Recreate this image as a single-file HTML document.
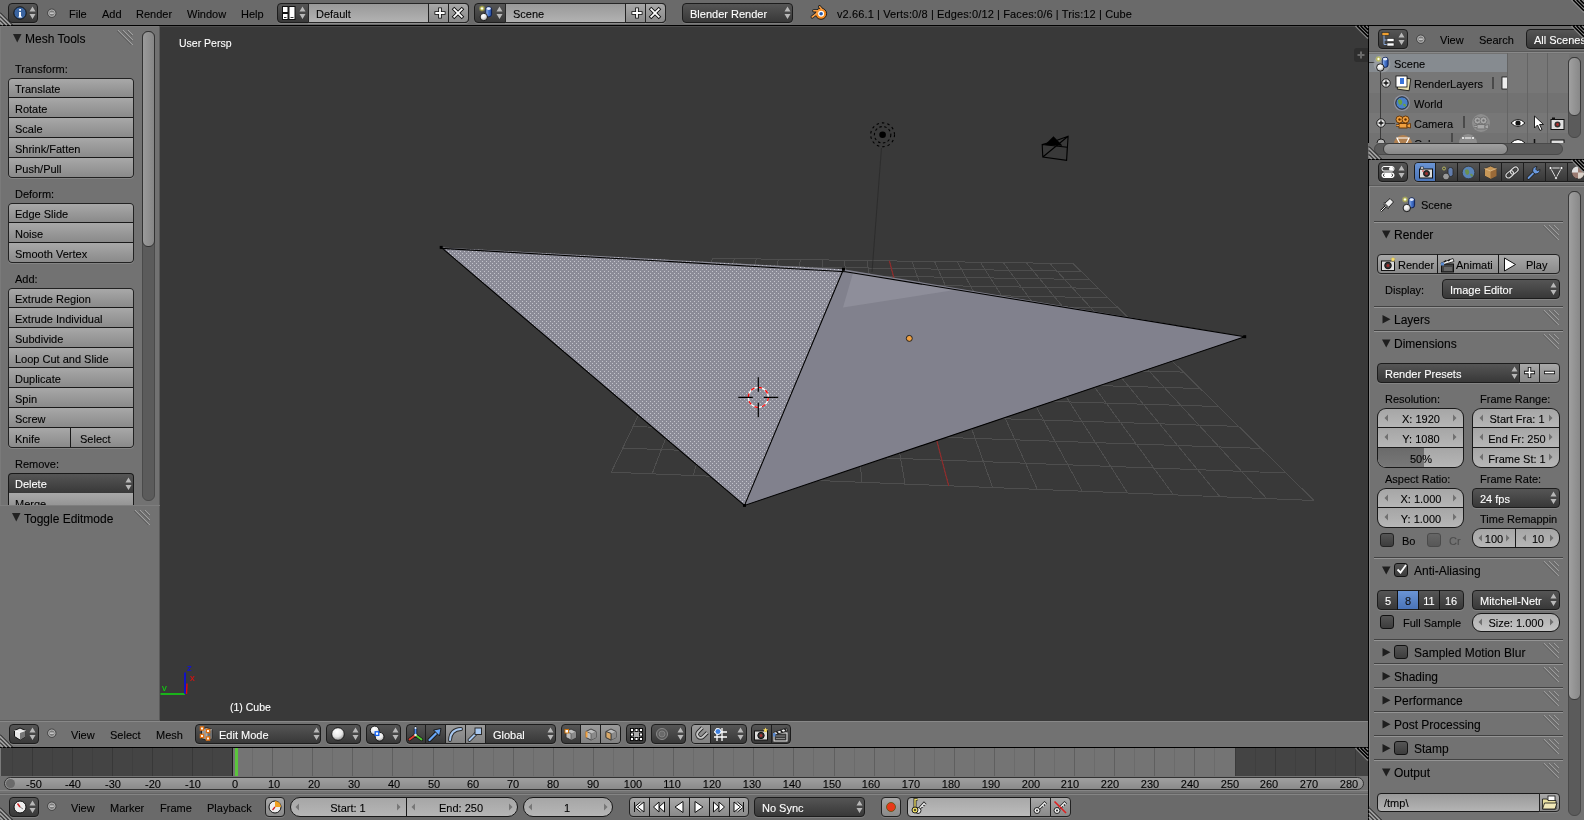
<!DOCTYPE html><html><head><meta charset="utf-8"><style>
*{box-sizing:border-box;margin:0;padding:0}
html,body{width:1584px;height:820px;overflow:hidden;background:#727272;font-family:"Liberation Sans",sans-serif;font-size:11px;color:#000}
.a{position:absolute}
.t{position:absolute;white-space:pre;line-height:1;-webkit-text-stroke:0.1px currentColor;will-change:transform}
svg{position:absolute;overflow:visible}
</style></head><body>
<svg width="0" height="0" style="position:absolute"><defs><radialGradient id="sphG" cx="0.4" cy="0.3" r="0.75"><stop offset="0" stop-color="#fff"/><stop offset="0.5" stop-color="#e6e6e6"/><stop offset="1" stop-color="#8a8a8a"/></radialGradient><linearGradient id="cylG" x1="0" x2="1"><stop offset="0" stop-color="#a8c4f0"/><stop offset="0.45" stop-color="#4a7ad0"/><stop offset="1" stop-color="#23489a"/></linearGradient></defs></svg>
<div class="a" style="left:0px;top:0px;width:1584px;height:25px;background:#6a6a6a"></div>
<div class="a" style="left:0px;top:25px;width:1584px;height:1px;background:#000"></div>
<div class="a" style="left:0px;top:26px;width:160px;height:695px;background:#727272"></div>
<div class="a" style="left:160px;top:26px;width:1208px;height:695px;background:#393939"></div>
<div class="a" style="left:160px;top:26px;width:1208px;height:1px;background:#4c4c4c"></div>
<div class="a" style="left:0px;top:721px;width:1368px;height:26px;background:#727272"></div>
<div class="a" style="left:0px;top:747px;width:1368px;height:1px;background:#000"></div>
<div class="a" style="left:0px;top:748px;width:1368px;height:46px;background:#727272"></div>
<div class="a" style="left:0px;top:794px;width:1368px;height:26px;background:#6a6a6a"></div>
<div class="a" style="left:1368px;top:26px;width:1px;height:794px;background:#000"></div>
<div class="a" style="left:1369px;top:26px;width:215px;height:133px;background:#727272"></div>
<div class="a" style="left:1369px;top:159px;width:215px;height:1px;background:#000"></div>
<div class="a" style="left:1369px;top:160px;width:215px;height:660px;background:#727272"></div>
<div class="a" style="left:8px;top:3px;width:30px;height:20px;background:linear-gradient(#555,#383838);border:1px solid #1c1c1c;box-shadow:0 1px 0 rgba(255,255,255,0.13);border-radius:4px"></div>
<svg style="left:13px;top:6px" width="14" height="14" viewBox="0 0 14 14"><circle cx="7" cy="7" r="6.2" fill="#3a64a0" stroke="#111" stroke-width="1"/><path d="M6 6h2v4.5h1v1H5.5v-1h0.5z M6.2 3h1.8v1.8H6.2z" fill="#fff"/></svg>
<svg style="left:29px;top:6px" width="8" height="14" viewBox="0 0 8 14"><path d="M0.5 5.5 L3.5 0.5 L6.5 5.5Z M0.5 8 L3.5 13 L6.5 8Z" fill="#b8b8b8"/></svg>
<svg style="left:47px;top:8px" width="12" height="12" viewBox="0 0 12 12"><circle cx="4.8" cy="5.2" r="4.2" fill="#7a7a7a" stroke="#3e3e3e" stroke-width="0.9"/><circle cx="4.8" cy="5.2" r="3.2" fill="none" stroke="#b8b8b8" stroke-width="0.9"/><path d="M2.8 5.2h4" stroke="#d0d0d0" stroke-width="1.4"/></svg>
<div class="t" style="left:69px;top:8.69px;font-size:11px;color:#000;">File</div>
<div class="t" style="left:102px;top:8.69px;font-size:11px;color:#000;">Add</div>
<div class="t" style="left:136px;top:8.69px;font-size:11px;color:#000;">Render</div>
<div class="t" style="left:187px;top:8.69px;font-size:11px;color:#000;">Window</div>
<div class="t" style="left:241px;top:8.69px;font-size:11px;color:#000;">Help</div>
<div class="a" style="left:277px;top:3px;width:192px;height:20px;background:linear-gradient(#555,#383838);border:1px solid #1c1c1c;box-shadow:0 1px 0 rgba(255,255,255,0.13);border-radius:4px"></div>
<div class="a" style="left:308px;top:3px;width:121px;height:20px;background:linear-gradient(#999,#b2b2b2);border:1px solid #262626;box-shadow:0 1px 0 rgba(255,255,255,0.13);"></div>
<div class="a" style="left:428px;top:3px;width:21px;height:20px;background:linear-gradient(#a8a8a8,#8a8a8a);border:1px solid #222;box-shadow:0 1px 0 rgba(255,255,255,0.13);"></div>
<div class="a" style="left:448px;top:3px;width:21px;height:20px;background:linear-gradient(#a8a8a8,#8a8a8a);border:1px solid #222;box-shadow:0 1px 0 rgba(255,255,255,0.13);border-radius:0 4px 4px 0"></div>
<div class="t" style="left:316px;top:8.69px;font-size:11px;color:#000;">Default</div>
<div class="a" style="left:474px;top:3px;width:192px;height:20px;background:linear-gradient(#555,#383838);border:1px solid #1c1c1c;box-shadow:0 1px 0 rgba(255,255,255,0.13);border-radius:4px"></div>
<div class="a" style="left:505px;top:3px;width:121px;height:20px;background:linear-gradient(#999,#b2b2b2);border:1px solid #262626;box-shadow:0 1px 0 rgba(255,255,255,0.13);"></div>
<div class="a" style="left:625px;top:3px;width:21px;height:20px;background:linear-gradient(#a8a8a8,#8a8a8a);border:1px solid #222;box-shadow:0 1px 0 rgba(255,255,255,0.13);"></div>
<div class="a" style="left:645px;top:3px;width:21px;height:20px;background:linear-gradient(#a8a8a8,#8a8a8a);border:1px solid #222;box-shadow:0 1px 0 rgba(255,255,255,0.13);border-radius:0 4px 4px 0"></div>
<div class="t" style="left:513px;top:8.69px;font-size:11px;color:#000;">Scene</div>
<div class="a" style="left:682px;top:3px;width:111px;height:20px;background:linear-gradient(#555,#383838);border:1px solid #1c1c1c;box-shadow:0 1px 0 rgba(255,255,255,0.13);border-radius:4px"></div>
<div class="t" style="left:690px;top:8.69px;font-size:11px;color:#fff;">Blender Render</div>
<svg style="left:784px;top:6px" width="8" height="14" viewBox="0 0 8 14"><path d="M0.5 5.5 L3.5 0.5 L6.5 5.5Z M0.5 8 L3.5 13 L6.5 8Z" fill="#b8b8b8"/></svg>
<div class="t" style="left:837px;top:8.69px;font-size:11px;color:#000;letter-spacing:0.12px">v2.66.1 | Verts:0/8 | Edges:0/12 | Faces:0/6 | Tris:12 | Cube</div>
<svg style="left:282px;top:6px" width="14" height="14" viewBox="0 0 14 14"><rect x="0.5" y="0.5" width="5.5" height="6" fill="#fff" stroke="#111" stroke-width="1"/><rect x="0.5" y="7.5" width="5.5" height="6" fill="#fff" stroke="#111" stroke-width="1"/><rect x="7" y="0.5" width="6" height="13" fill="#fff" stroke="#111" stroke-width="1"/><path d="M2 11.5H4.5M8.5 11.5H11.5" stroke="#333" stroke-width="1"/></svg>
<svg style="left:299px;top:6px" width="8" height="14" viewBox="0 0 8 14"><path d="M0.5 5.5 L3.5 0.5 L6.5 5.5Z M0.5 8 L3.5 13 L6.5 8Z" fill="#b8b8b8"/></svg>
<svg style="left:434px;top:7px" width="12" height="12" viewBox="0 0 12 12"><path d="M6 0.5V11.5M0.5 6H11.5" stroke="#111" stroke-width="3.6"/><path d="M6 1.3V10.7M1.3 6H10.7" stroke="#fff" stroke-width="1.8"/></svg>
<svg style="left:452px;top:7px" width="12" height="12" viewBox="0 0 12 12"><path d="M1 1L11 11M11 1L1 11" stroke="#111" stroke-width="3.6"/><path d="M1.6 1.6L10.4 10.4M10.4 1.6L1.6 10.4" stroke="#fff" stroke-width="1.8"/></svg>
<svg style="left:631px;top:7px" width="12" height="12" viewBox="0 0 12 12"><path d="M6 0.5V11.5M0.5 6H11.5" stroke="#111" stroke-width="3.6"/><path d="M6 1.3V10.7M1.3 6H10.7" stroke="#fff" stroke-width="1.8"/></svg>
<svg style="left:649px;top:7px" width="12" height="12" viewBox="0 0 12 12"><path d="M1 1L11 11M11 1L1 11" stroke="#111" stroke-width="3.6"/><path d="M1.6 1.6L10.4 10.4M10.4 1.6L1.6 10.4" stroke="#fff" stroke-width="1.8"/></svg>
<svg style="left:478px;top:5px" width="16" height="16" viewBox="0 0 16 16"><circle cx="4" cy="3.5" r="3" fill="#d8d860" opacity="0.35"/><circle cx="4" cy="3.5" r="1.7" fill="#fffff0" stroke="#b0b030" stroke-width="0.8"/><rect x="7.8" y="1.8" width="5.8" height="10" rx="2.6" fill="url(#cylG)" stroke="#0c1c4c" stroke-width="0.9"/><ellipse cx="10.7" cy="3.6" rx="2.2" ry="1.3" fill="#e4ecff"/><circle cx="5.8" cy="12" r="3.7" fill="url(#sphG)" stroke="#111" stroke-width="0.9"/></svg>
<svg style="left:496px;top:6px" width="8" height="14" viewBox="0 0 8 14"><path d="M0.5 5.5 L3.5 0.5 L6.5 5.5Z M0.5 8 L3.5 13 L6.5 8Z" fill="#b8b8b8"/></svg>
<svg style="left:809px;top:5px" width="19" height="16" viewBox="0 0 19 16"><path d="M4.8 5.8H10.5M3.2 12L8.5 7.8M10.6 1.8L13 4.5" stroke="#1e1e1e" stroke-width="3.2" stroke-linecap="round"/><circle cx="12" cy="8.7" r="5.6" fill="#f58a1e" stroke="#1e1e1e" stroke-width="1"/><path d="M4.8 5.8H10.5M3.2 12L8.5 7.8M10.6 1.8L13 4.5" stroke="#f8a048" stroke-width="1.6" stroke-linecap="round"/><circle cx="12.1" cy="8.7" r="3" fill="#fff"/><circle cx="12.1" cy="8.7" r="1.8" fill="#2a5aa8"/></svg>
<svg style="left:0px;top:11px" width="14" height="14" viewBox="0 0 14 14"><path d="M0 3L11 14M0 7L7 14M0 11L3 14" stroke="#a0a0a0" stroke-width="2"/><path d="M0 1.5L12.5 14M0 5.5L8.5 14M0 9.5L4.5 14" stroke="#111" stroke-width="1"/></svg>
<svg style="left:1570px;top:0px" width="14" height="14" viewBox="0 0 14 14"><path d="M1.5 0L14 12.5M5 0L14 9M8.5 0L14 5.5M12 0L14 2" stroke="#8a8a8a" stroke-width="1.5"/><path d="M3.25 0L14 10.75M6.75 0L14 7.25M10.25 0L14 3.75" stroke="#000" stroke-width="1.5"/></svg>
<div class="a" style="left:0px;top:26px;width:160px;height:479px;background:#727272"></div>
<div class="a" style="left:0px;top:26px;width:160px;height:1px;background:#7a7a7a"></div>
<div class="a" style="left:0px;top:505px;width:160px;height:1px;background:#7e7e7e"></div>
<div class="a" style="left:0px;top:506px;width:160px;height:215px;background:#727272"></div>
<div class="a" style="left:0px;top:26px;width:1px;height:695px;background:#7a7a7a"></div>
<div class="a" style="left:159px;top:26px;width:1px;height:695px;background:#5a5a5a"></div>
<div class="a" style="left:142px;top:31px;width:13px;height:470px;background:#5b5b5b;border:1px solid #4a4a4a;border-radius:6px"></div>
<div class="a" style="left:142px;top:31px;width:13px;height:216px;background:linear-gradient(90deg,#9a9a9a,#868686);border:1px solid #323232;border-radius:6px"></div>
<svg style="left:13px;top:34px" width="9" height="9" viewBox="0 0 9 9"><path d="M0 0H8.5L4.25 8.5Z" fill="#222"/></svg>
<div class="t" style="left:25px;top:32.84px;font-size:12px;color:#000;">Mesh Tools</div>
<svg style="left:117px;top:29px" width="17" height="17" viewBox="0 0 17 17"><path d="M1 1L16 16M6 1L16 11M11 1L16 6" stroke="#a0a0a0"/><path d="M0 2L14 16M5 2L15 12M10 2L15 7" stroke="#555" stroke-opacity="0.6"/></svg>
<div class="t" style="left:15px;top:63.69px;font-size:11px;color:#000;">Transform:</div>
<div class="a" style="left:8px;top:78px;width:126px;height:100px;border:1px solid #222;box-shadow:0 1px 0 rgba(255,255,255,0.13);border-radius:4px;background:#191919"></div>
<div class="a" style="left:9px;top:79px;width:124px;height:18px;background:linear-gradient(#a8a8a8,#8a8a8a);border-radius:3px 3px 0 0;"></div>
<div class="t" style="left:15px;top:83.69px;font-size:11px;color:#000;">Translate</div>
<div class="a" style="left:9px;top:98px;width:124px;height:19px;background:linear-gradient(#a8a8a8,#8a8a8a);"></div>
<div class="t" style="left:15px;top:103.69px;font-size:11px;color:#000;">Rotate</div>
<div class="a" style="left:9px;top:118px;width:124px;height:19px;background:linear-gradient(#a8a8a8,#8a8a8a);"></div>
<div class="t" style="left:15px;top:123.69px;font-size:11px;color:#000;">Scale</div>
<div class="a" style="left:9px;top:138px;width:124px;height:19px;background:linear-gradient(#a8a8a8,#8a8a8a);"></div>
<div class="t" style="left:15px;top:143.69px;font-size:11px;color:#000;">Shrink/Fatten</div>
<div class="a" style="left:9px;top:158px;width:124px;height:19px;background:linear-gradient(#a8a8a8,#8a8a8a);border-radius:0 0 3px 3px;"></div>
<div class="t" style="left:15px;top:163.69px;font-size:11px;color:#000;">Push/Pull</div>
<div class="t" style="left:15px;top:188.69px;font-size:11px;color:#000;">Deform:</div>
<div class="a" style="left:8px;top:203px;width:126px;height:60px;border:1px solid #222;box-shadow:0 1px 0 rgba(255,255,255,0.13);border-radius:4px;background:#191919"></div>
<div class="a" style="left:9px;top:204px;width:124px;height:18px;background:linear-gradient(#a8a8a8,#8a8a8a);border-radius:3px 3px 0 0;"></div>
<div class="t" style="left:15px;top:208.69px;font-size:11px;color:#000;">Edge Slide</div>
<div class="a" style="left:9px;top:223px;width:124px;height:19px;background:linear-gradient(#a8a8a8,#8a8a8a);"></div>
<div class="t" style="left:15px;top:228.69px;font-size:11px;color:#000;">Noise</div>
<div class="a" style="left:9px;top:243px;width:124px;height:19px;background:linear-gradient(#a8a8a8,#8a8a8a);border-radius:0 0 3px 3px;"></div>
<div class="t" style="left:15px;top:248.69px;font-size:11px;color:#000;">Smooth Vertex</div>
<div class="t" style="left:15px;top:273.69px;font-size:11px;color:#000;">Add:</div>
<div class="a" style="left:8px;top:288px;width:126px;height:160px;border:1px solid #222;box-shadow:0 1px 0 rgba(255,255,255,0.13);border-radius:4px;background:#191919"></div>
<div class="a" style="left:9px;top:289px;width:124px;height:18px;background:linear-gradient(#a8a8a8,#8a8a8a);border-radius:3px 3px 0 0;"></div>
<div class="t" style="left:15px;top:293.69px;font-size:11px;color:#000;">Extrude Region</div>
<div class="a" style="left:9px;top:308px;width:124px;height:19px;background:linear-gradient(#a8a8a8,#8a8a8a);"></div>
<div class="t" style="left:15px;top:313.69px;font-size:11px;color:#000;">Extrude Individual</div>
<div class="a" style="left:9px;top:328px;width:124px;height:19px;background:linear-gradient(#a8a8a8,#8a8a8a);"></div>
<div class="t" style="left:15px;top:333.69px;font-size:11px;color:#000;">Subdivide</div>
<div class="a" style="left:9px;top:348px;width:124px;height:19px;background:linear-gradient(#a8a8a8,#8a8a8a);"></div>
<div class="t" style="left:15px;top:353.69px;font-size:11px;color:#000;">Loop Cut and Slide</div>
<div class="a" style="left:9px;top:368px;width:124px;height:19px;background:linear-gradient(#a8a8a8,#8a8a8a);"></div>
<div class="t" style="left:15px;top:373.69px;font-size:11px;color:#000;">Duplicate</div>
<div class="a" style="left:9px;top:388px;width:124px;height:19px;background:linear-gradient(#a8a8a8,#8a8a8a);"></div>
<div class="t" style="left:15px;top:393.69px;font-size:11px;color:#000;">Spin</div>
<div class="a" style="left:9px;top:408px;width:124px;height:19px;background:linear-gradient(#a8a8a8,#8a8a8a);"></div>
<div class="t" style="left:15px;top:413.69px;font-size:11px;color:#000;">Screw</div>
<div class="a" style="left:9px;top:428px;width:61px;height:19px;background:linear-gradient(#a8a8a8,#8a8a8a);border-radius:0 0 0 3px;"></div>
<div class="a" style="left:71px;top:428px;width:62px;height:19px;background:linear-gradient(#a8a8a8,#8a8a8a);border-radius:0 0 3px 0;"></div>
<div class="t" style="left:15px;top:433.69px;font-size:11px;color:#000;">Knife</div>
<div class="t" style="left:80px;top:433.69px;font-size:11px;color:#000;">Select</div>
<div class="t" style="left:15px;top:458.69px;font-size:11px;color:#000;">Remove:</div>
<div class="a" style="left:0;top:26px;width:160px;height:479px;overflow:hidden">
<div class="a" style="left:8px;top:447px;width:126px;height:40px;background:#191919;border-radius:4px"></div>
<div class="a" style="left:9px;top:448px;width:124px;height:19px;background:linear-gradient(#555,#383838);border-radius:3px 3px 0 0"></div>
<div class="a" style="left:9px;top:467px;width:124px;height:19px;background:linear-gradient(#a8a8a8,#8a8a8a)"></div>
</div>
<div class="t" style="left:15px;top:478.69px;font-size:11px;color:#fff;">Delete</div>
<svg style="left:125px;top:477px" width="8" height="14" viewBox="0 0 8 14"><path d="M0.5 5.5 L3.5 0.5 L6.5 5.5Z M0.5 8 L3.5 13 L6.5 8Z" fill="#b8b8b8"/></svg>
<div class="t" style="left:15px;top:498.69px;font-size:11px;color:#000;">Merge</div>
<div class="a" style="left:0px;top:505px;width:160px;height:1px;background:#7e7e7e"></div>
<div class="a" style="left:0px;top:506px;width:159px;height:215px;background:#727272"></div>
<svg style="left:12px;top:513px" width="9" height="9" viewBox="0 0 9 9"><path d="M0 0H8.5L4.25 8.5Z" fill="#222"/></svg>
<div class="t" style="left:24px;top:512.84px;font-size:12px;color:#000;">Toggle Editmode</div>
<svg style="left:134px;top:509px" width="17" height="17" viewBox="0 0 17 17"><path d="M1 1L16 16M6 1L16 11M11 1L16 6" stroke="#a0a0a0"/><path d="M0 2L14 16M5 2L15 12M10 2L15 7" stroke="#555" stroke-opacity="0.6"/></svg>
<svg style="left:160px;top:26px" width="1208" height="695" viewBox="0 0 1208 695"><defs><pattern id="dots" x="0" y="0" width="4" height="4" patternUnits="userSpaceOnUse"><rect width="4" height="4" fill="#8b8b97"/><rect x="0" y="1" width="1" height="1" fill="#c4c4cc"/><rect x="2" y="3" width="1" height="1" fill="#c4c4cc"/></pattern></defs><path d="M553.0 232.3L451.3 446.2M553.0 232.3L913.2 237.6M574.7 232.6L492.1 447.8M549.6 239.5L921.0 245.4M596.4 232.9L533.2 449.5M545.9 247.2L929.4 253.6M618.3 233.2L574.8 451.2M542.0 255.4L938.4 262.4M640.3 233.6L616.7 452.9M537.8 264.2L947.9 271.8M662.4 233.9L659.1 454.6M533.4 273.6L958.2 282.0M684.6 234.2L701.8 456.3M528.6 283.6L969.3 292.8M706.9 234.6L745.0 458.0M523.5 294.4L981.2 304.6M729.4 234.9L788.7 459.8M517.9 306.0L994.1 317.3M751.9 235.2L832.7 461.6M512.0 318.6L1008.1 331.0M774.6 235.6L877.3 463.4M505.5 332.2L1023.4 346.1M797.4 235.9L922.2 465.2M498.4 347.1L1040.1 362.5M820.3 236.2L967.6 467.0M490.8 363.2L1058.4 380.5M843.3 236.6L1013.5 468.9M482.3 381.0L1078.6 400.4M866.5 236.9L1059.9 470.7M473.0 400.5L1101.0 422.4M889.8 237.3L1106.7 472.6M462.8 422.1L1126.0 447.0M913.2 237.6L1154.0 474.5M451.3 446.2L1154.0 474.5" stroke="#4e4e4e" stroke-width="1" fill="none" shape-rendering="crispEdges"/><path d="M729.4 234.9L788.7 459.8" stroke="#8f2a2a" stroke-width="1.2"/><path d="M721.5 122L712 246" stroke="#262626" stroke-width="0.8" stroke-opacity="0.8"/><polygon points="683.5,243.2 1084.7,310.7 584.5,479.4" fill="#81818d"/><polygon points="693.0,247.0 798.0,263.5 683.0,281.5" fill="#8e8e9a"/><polygon points="281.2,221.4 683.5,243.2 584.5,479.4" fill="url(#dots)"/><polyline points="281.2,222.4 685.5,245.7 1084.7,310.7 584.5,479.4 281.2,221.4" fill="none" stroke="#000" stroke-width="1.1"/><path d="M683.5,243.2L584.5,479.4" stroke="#000" stroke-width="1.1"/><rect x="279.7" y="219.9" width="3" height="3" fill="#000"/><rect x="682.0" y="241.7" width="3" height="3" fill="#000"/><rect x="583.0" y="477.9" width="3" height="3" fill="#000"/><rect x="1083.2" y="309.2" width="3" height="3" fill="#000"/><circle cx="749.3" cy="312.4" r="3" fill="#f0a040" stroke="#222" stroke-width="1"/><circle cx="598.3" cy="371.3" r="10" fill="none" stroke="#fff" stroke-width="1.3"/><circle cx="598.3" cy="371.3" r="10" fill="none" stroke="#f00" stroke-width="1.3" stroke-dasharray="3.9 3.9"/><path d="M578.3 371.3H592.8M603.8 371.3H618.3M598.3 351.3V365.8M598.3 376.8V391.3" stroke="#000" stroke-width="1.2"/><circle cx="722.6" cy="108.80000000000001" r="3.3" fill="#000"/><circle cx="722.6" cy="108.80000000000001" r="8.2" fill="none" stroke="#000" stroke-width="1.1" stroke-dasharray="2.5 2.5"/><circle cx="722.6" cy="108.80000000000001" r="11.9" fill="none" stroke="#000" stroke-width="1.1" stroke-dasharray="2.5 3"/><path d="M882.2,118.5L882.8,131.0L906.6,134.4L907.3,121.3Z M882.2,118.5L895.0,115.0L908.1,110.3L906.6,134.4 M882.8,131.0L908.1,110.3" fill="none" stroke="#000" stroke-width="1.1"/><polygon points="884.6,119.1 893.5,110.3 902.6,119.7" fill="#000"/><path d="M0.5 668H25" stroke="#10dc10" stroke-width="1.5"/><path d="M25 668V646.5" stroke="#0a0ae6" stroke-width="1.6"/><path d="M26.5 668L27 657.5" stroke="#e60a0a" stroke-width="1.4"/></svg>
<div class="t" style="left:179px;top:38.11px;font-size:10.5px;color:#fff;">User Persp</div>
<div class="t" style="left:230px;top:702.11px;font-size:10.5px;color:#fff;">(1) Cube</div>
<div class="t" style="left:187px;top:662.96px;font-size:9.5px;color:#1010e0;">z</div>
<div class="t" style="left:189.5px;top:673.46px;font-size:9.5px;color:#e01010;">x</div>
<div class="t" style="left:162px;top:682.96px;font-size:9.5px;color:#10d010;">v</div>
<svg style="left:1355px;top:26px" width="13" height="13" viewBox="0 0 13 13"><path d="M0.5 0L13 12.5M4 0L13 9M7.5 0L13 5.5M11 0L13 2" stroke="#858585" stroke-width="1.5"/><path d="M2.25 0L13 10.75M5.75 0L13 7.25M9.25 0L13 3.75" stroke="#000" stroke-width="1.5"/></svg>
<div class="a" style="left:1354px;top:48px;width:14px;height:14px;background:#2e2e2e;border-radius:3px 0 0 3px"></div>
<svg style="left:1356px;top:50px" width="10" height="10" viewBox="0 0 10 10"><path d="M5 1.5V8.5M1.5 5H8.5" stroke="#6a6a6a" stroke-width="2"/></svg>
<div class="a" style="left:0px;top:720px;width:160px;height:1px;background:#5e5e5e"></div>
<div class="a" style="left:0px;top:721px;width:1368px;height:1px;background:#888888"></div>
<div class="a" style="left:9px;top:724px;width:30px;height:20px;background:linear-gradient(#555,#383838);border:1px solid #1c1c1c;box-shadow:0 1px 0 rgba(255,255,255,0.13);border-radius:4px"></div>
<svg style="left:13px;top:727px" width="14" height="14" viewBox="0 0 14 14"><path d="M7 1L12.5 3.5V9.5L7 13L1.5 9.5V3.5Z" fill="#e8e8e8" stroke="#111" stroke-width="1"/><path d="M7 5.5L12.5 3.5V9.5L7 13Z" fill="#777"/><path d="M1.5 3.5L7 5.5L12.5 3.5" stroke="#fff" fill="none" stroke-width="0.8"/></svg>
<svg style="left:29px;top:727px" width="8" height="14" viewBox="0 0 8 14"><path d="M0.5 5.5 L3.5 0.5 L6.5 5.5Z M0.5 8 L3.5 13 L6.5 8Z" fill="#b8b8b8"/></svg>
<svg style="left:47px;top:728px" width="12" height="12" viewBox="0 0 12 12"><circle cx="4.8" cy="5.2" r="4.2" fill="#7a7a7a" stroke="#3e3e3e" stroke-width="0.9"/><circle cx="4.8" cy="5.2" r="3.2" fill="none" stroke="#b8b8b8" stroke-width="0.9"/><path d="M2.8 5.2h4" stroke="#d0d0d0" stroke-width="1.4"/></svg>
<div class="t" style="left:71px;top:729.69px;font-size:11px;color:#000;">View</div>
<div class="t" style="left:110px;top:729.69px;font-size:11px;color:#000;">Select</div>
<div class="t" style="left:156px;top:729.69px;font-size:11px;color:#000;">Mesh</div>
<div class="a" style="left:195px;top:724px;width:126px;height:20px;background:linear-gradient(#555,#383838);border:1px solid #1c1c1c;box-shadow:0 1px 0 rgba(255,255,255,0.13);border-radius:4px"></div>
<svg style="left:199px;top:726px" width="16" height="16" viewBox="0 0 16 16"><path d="M2.5 3L7.5 1.5L13 3.5V12.5L8 14.5L2.5 12.5Z" fill="#9a9a9a" stroke="#1a1a1a" stroke-width="0.9"/><path d="M8 5L13 3.5V12.5L8 14.5Z" fill="#6e6e6e"/><path d="M2.5 3L8 5L13 3.5M8 5V14.5" stroke="#c8c8c8" stroke-width="0.7" fill="none"/><rect x="1.4" y="0.8999999999999999" width="3.2" height="3.2" fill="#fff" stroke="#e07010" stroke-width="1.3"/><rect x="7.4" y="3.4" width="3.2" height="3.2" fill="#fff" stroke="#e07010" stroke-width="1.3"/><rect x="1.4" y="8.4" width="3.2" height="3.2" fill="#fff" stroke="#e07010" stroke-width="1.3"/><rect x="7.4" y="10.9" width="3.2" height="3.2" fill="#fff" stroke="#e07010" stroke-width="1.3"/></svg>
<div class="t" style="left:219px;top:729.69px;font-size:11px;color:#fff;">Edit Mode</div>
<svg style="left:313px;top:727px" width="8" height="14" viewBox="0 0 8 14"><path d="M0.5 5.5 L3.5 0.5 L6.5 5.5Z M0.5 8 L3.5 13 L6.5 8Z" fill="#b8b8b8"/></svg>
<div class="a" style="left:326px;top:724px;width:35px;height:20px;background:linear-gradient(#555,#383838);border:1px solid #1c1c1c;box-shadow:0 1px 0 rgba(255,255,255,0.13);border-radius:4px"></div>
<svg style="left:330px;top:726px" width="16" height="16" viewBox="0 0 16 16"><defs><radialGradient id="sph" cx="0.42" cy="0.3" r="0.75"><stop offset="0" stop-color="#fff"/><stop offset="0.55" stop-color="#e8e8e8"/><stop offset="1" stop-color="#8a8a8a"/></radialGradient></defs><circle cx="8" cy="8" r="6.3" fill="url(#sph)" stroke="#111" stroke-width="0.9"/></svg>
<svg style="left:352px;top:727px" width="8" height="14" viewBox="0 0 8 14"><path d="M0.5 5.5 L3.5 0.5 L6.5 5.5Z M0.5 8 L3.5 13 L6.5 8Z" fill="#b8b8b8"/></svg>
<div class="a" style="left:366px;top:724px;width:35px;height:20px;background:linear-gradient(#555,#383838);border:1px solid #1c1c1c;box-shadow:0 1px 0 rgba(255,255,255,0.13);border-radius:4px"></div>
<svg style="left:369px;top:725px" width="16" height="17" viewBox="0 0 16 17"><circle cx="10.6" cy="11.75" r="4.4" fill="url(#sph)" stroke="#111" stroke-width="0.9"/><circle cx="5.7" cy="5.5" r="4.4" fill="url(#sph)" stroke="#111" stroke-width="0.9"/><rect x="6.2" y="6.8" width="3.6" height="3.6" fill="#fff" stroke="#1060f0" stroke-width="1.3"/></svg>
<svg style="left:392px;top:727px" width="8" height="14" viewBox="0 0 8 14"><path d="M0.5 5.5 L3.5 0.5 L6.5 5.5Z M0.5 8 L3.5 13 L6.5 8Z" fill="#b8b8b8"/></svg>
<div class="a" style="left:406px;top:724px;width:150px;height:20px;background:linear-gradient(#555,#383838);border:1px solid #1c1c1c;box-shadow:0 1px 0 rgba(255,255,255,0.13);border-radius:4px"></div>
<div class="a" style="left:445px;top:725px;width:40px;height:18px;background:linear-gradient(#9a9a9a,#828282)"></div>
<div class="a" style="left:425px;top:724px;width:1px;height:20px;background:#1e1e1e"></div>
<div class="a" style="left:445px;top:724px;width:1px;height:20px;background:#1e1e1e"></div>
<div class="a" style="left:465px;top:724px;width:1px;height:20px;background:#1e1e1e"></div>
<div class="a" style="left:485px;top:724px;width:1px;height:20px;background:#1e1e1e"></div>
<svg style="left:407px;top:726px" width="17" height="17" viewBox="0 0 17 17"><path d="M8.5 9V2M8.5 9L2.5 13.5M8.5 9L14.5 13.5" stroke="#1a1a1a" stroke-width="3.4" stroke-linecap="round"/><path d="M8.5 9V2" stroke="#4a8af0" stroke-width="1.8" stroke-linecap="round"/><path d="M8.5 9L2.5 13.5" stroke="#e04030" stroke-width="1.8" stroke-linecap="round"/><path d="M8.5 9L14.5 13.5" stroke="#50d030" stroke-width="1.8" stroke-linecap="round"/><circle cx="8.5" cy="9" r="1.2" fill="#eee"/><circle cx="8.5" cy="2" r="1" fill="#eee"/></svg>
<svg style="left:427px;top:726px" width="17" height="17" viewBox="0 0 17 17"><path d="M2.5 14L10 6.5" stroke="#1a1a1a" stroke-width="4" stroke-linecap="round"/><path d="M2.5 14L10 6.5" stroke="#6aa8f8" stroke-width="2.2" stroke-linecap="round"/><path d="M14 2.5L6.5 4L12.5 10Z" fill="#6aa8f8" stroke="#1a1a1a" stroke-width="1" stroke-linejoin="round"/></svg>
<svg style="left:447px;top:726px" width="17" height="17" viewBox="0 0 17 17"><path d="M3 14Q3.5 3.5 14 3" stroke="#2a2a2a" stroke-width="3.8" fill="none" stroke-linecap="round"/><path d="M3 14Q3.5 3.5 14 3" stroke="#a8c8f0" stroke-width="2" fill="none" stroke-linecap="round"/></svg>
<svg style="left:467px;top:726px" width="17" height="17" viewBox="0 0 17 17"><path d="M2.5 14L9 7.5" stroke="#2a2a2a" stroke-width="3.8" stroke-linecap="round"/><path d="M2.5 14L9 7.5" stroke="#a8c8f0" stroke-width="2" stroke-linecap="round"/><rect x="8" y="2" width="6.5" height="6.5" fill="#a8c8f0" stroke="#2a2a2a" stroke-width="1"/></svg>
<div class="t" style="left:493px;top:729.69px;font-size:11px;color:#fff;">Global</div>
<svg style="left:547px;top:727px" width="8" height="14" viewBox="0 0 8 14"><path d="M0.5 5.5 L3.5 0.5 L6.5 5.5Z M0.5 8 L3.5 13 L6.5 8Z" fill="#b8b8b8"/></svg>
<div class="a" style="left:561px;top:724px;width:60px;height:20px;background:linear-gradient(#555,#383838);border:1px solid #1c1c1c;box-shadow:0 1px 0 rgba(255,255,255,0.13);border-radius:4px"></div>
<div class="a" style="left:580px;top:725px;width:40px;height:18px;background:linear-gradient(#9a9a9a,#828282);border-radius:0 3px 3px 0"></div>
<div class="a" style="left:580px;top:724px;width:1px;height:20px;background:#1e1e1e"></div>
<div class="a" style="left:600px;top:724px;width:1px;height:20px;background:#1e1e1e"></div>
<svg style="left:564px;top:727px" width="14" height="15" viewBox="0 0 14 15"><path d="M7 2L12 4.5V10.5L7 13L2 10.5V4.5Z" fill="#bdbdbd" stroke="#333" stroke-width="0.9"/><path d="M7 6.5L12 4.5V10.5L7 13Z" fill="#8a8a8a"/><path d="M2 4.5L7 6.5V13" stroke="#555" fill="none" stroke-width="0.8"/><rect x="1" y="2.5" width="3.5" height="3.5" fill="#fff" stroke="#d07000" stroke-width="0.9"/></svg>
<svg style="left:584px;top:727px" width="14" height="15" viewBox="0 0 14 15"><path d="M7 2L12 4.5V10.5L7 13L2 10.5V4.5Z" fill="#bdbdbd" stroke="#333" stroke-width="0.9"/><path d="M7 6.5L12 4.5V10.5L7 13Z" fill="#8a8a8a"/><path d="M2 4.5L7 6.5V13" stroke="#555" fill="none" stroke-width="0.8"/><path d="M2.5 4.5V10.5" stroke="#f0a040" stroke-width="2"/></svg>
<svg style="left:604px;top:727px" width="14" height="15" viewBox="0 0 14 15"><path d="M7 2L12 4.5V10.5L7 13L2 10.5V4.5Z" fill="#bdbdbd" stroke="#333" stroke-width="0.9"/><path d="M7 6.5L12 4.5V10.5L7 13Z" fill="#8a8a8a"/><path d="M2 4.5L7 6.5V13" stroke="#555" fill="none" stroke-width="0.8"/><path d="M2 4.5L7 6.5V13L2 10.5Z" fill="#d8a868" stroke="#333" stroke-width="0.8"/></svg>
<div class="a" style="left:626px;top:724px;width:20px;height:20px;background:linear-gradient(#555,#383838);border:1px solid #1c1c1c;box-shadow:0 1px 0 rgba(255,255,255,0.13);border-radius:4px"></div>
<svg style="left:629px;top:727px" width="15" height="15" viewBox="0 0 15 15"><rect x="3" y="3" width="9" height="9" fill="#aaa"/><rect x="1.5" y="1.5" width="3" height="3" fill="#fff" stroke="#000" stroke-width="0.9"/><rect x="10.5" y="1.5" width="3" height="3" fill="#fff" stroke="#000" stroke-width="0.9"/><rect x="1.5" y="10.5" width="3" height="3" fill="#fff" stroke="#000" stroke-width="0.9"/><rect x="10.5" y="10.5" width="3" height="3" fill="#fff" stroke="#000" stroke-width="0.9"/><rect x="6" y="1.5" width="3" height="3" fill="#fff" stroke="#000" stroke-width="0.9"/><rect x="6" y="10.5" width="3" height="3" fill="#fff" stroke="#000" stroke-width="0.9"/><rect x="1.5" y="6" width="3" height="3" fill="#fff" stroke="#000" stroke-width="0.9"/><rect x="10.5" y="6" width="3" height="3" fill="#fff" stroke="#000" stroke-width="0.9"/></svg>
<div class="a" style="left:651px;top:724px;width:35px;height:20px;background:linear-gradient(#555,#383838);border:1px solid #1c1c1c;box-shadow:0 1px 0 rgba(255,255,255,0.13);border-radius:4px"></div>
<svg style="left:655px;top:727px" width="14" height="14" viewBox="0 0 14 14"><circle cx="7" cy="7" r="5.5" fill="#5a5a5a" stroke="#8a8a8a" stroke-width="1"/><circle cx="7" cy="7" r="3" fill="#6a6a6a" stroke="#8a8a8a" stroke-width="0.8"/></svg>
<svg style="left:677px;top:727px" width="8" height="14" viewBox="0 0 8 14"><path d="M0.5 5.5 L3.5 0.5 L6.5 5.5Z M0.5 8 L3.5 13 L6.5 8Z" fill="#b8b8b8"/></svg>
<div class="a" style="left:691px;top:724px;width:56px;height:20px;background:linear-gradient(#555,#383838);border:1px solid #1c1c1c;box-shadow:0 1px 0 rgba(255,255,255,0.13);border-radius:4px"></div>
<div class="a" style="left:692px;top:725px;width:18px;height:18px;background:linear-gradient(#9a9a9a,#828282);border-radius:3px 0 0 3px"></div>
<div class="a" style="left:710px;top:724px;width:1px;height:20px;background:#1e1e1e"></div>
<svg style="left:693px;top:726px" width="16" height="16" viewBox="0 0 16 16"><g transform="rotate(45 8 8)"><path d="M4.5 2.5V8.5A3.5 3.5 0 0 0 11.5 8.5V2.5" stroke="#2a2a2a" stroke-width="3.8" fill="none"/><path d="M4.5 2.5V8.5A3.5 3.5 0 0 0 11.5 8.5V2.5" stroke="#c8c8c8" stroke-width="2" fill="none"/></g></svg>
<svg style="left:713px;top:727px" width="16" height="15" viewBox="0 0 16 15"><path d="M4 1V14M9 1V14M1 5H14M1 10H14" stroke="#fff" stroke-width="1.3"/><circle cx="5" cy="4.5" r="3" fill="#3e80e0" stroke="#fff" stroke-width="1"/></svg>
<svg style="left:737px;top:727px" width="8" height="14" viewBox="0 0 8 14"><path d="M0.5 5.5 L3.5 0.5 L6.5 5.5Z M0.5 8 L3.5 13 L6.5 8Z" fill="#b8b8b8"/></svg>
<div class="a" style="left:751px;top:724px;width:40px;height:20px;background:linear-gradient(#555,#383838);border:1px solid #1c1c1c;box-shadow:0 1px 0 rgba(255,255,255,0.13);border-radius:4px"></div>
<div class="a" style="left:771px;top:724px;width:1px;height:20px;background:#1e1e1e"></div>
<svg style="left:753px;top:727px" width="16" height="15" viewBox="0 0 16 15"><rect x="1.5" y="4" width="13" height="9" fill="#dcdcdc" stroke="#111" stroke-width="1"/><circle cx="8" cy="8.5" r="3.2" fill="#333" stroke="#111"/><circle cx="8" cy="8.5" r="1.5" fill="#a03030"/><path d="M12.5 0.5L13.2 2.2L15 2.5L13.7 3.6L14 5.5L12.5 4.5L11 5.5L11.3 3.6L10 2.5L11.8 2.2Z" fill="#ffe060"/></svg>
<svg style="left:772px;top:725px" width="18" height="18" viewBox="0 0 18 18"><rect x="2" y="8" width="13" height="8" fill="#3a3a3a" stroke="#eee" stroke-width="1"/><path d="M4 11H13M4 13.5H13" stroke="#999" stroke-width="0.8"/><path d="M1.5 7.5L14.5 3L15.5 5.8L2.5 10Z" fill="#eee" stroke="#111" stroke-width="0.8"/><path d="M4.5 6.5L6.5 8.8M8.5 5.2L10.5 7.5M12.5 3.8L14.2 5.8" stroke="#111" stroke-width="1.4"/><rect x="1" y="8" width="2.5" height="3.5" fill="#5a8ad0"/></svg>
<div class="a" style="left:0px;top:748px;width:1368px;height:28px;background:#747474"></div>
<div class="a" style="left:0px;top:748px;width:232px;height:28px;background:#444444"></div>
<div class="a" style="left:1235px;top:748px;width:133px;height:28px;background:#444444"></div>
<svg style="left:0px;top:748px" width="1368" height="29" viewBox="0 0 1368 29"><path d="M12.0 0V28M32.0 0V28M52.1 0V28M72.1 0V28M92.2 0V28M112.2 0V28M132.2 0V28M152.3 0V28M172.3 0V28M192.4 0V28M212.4 0V28M232.5 0V28M252.6 0V28M272.6 0V28M292.6 0V28M312.7 0V28M332.8 0V28M352.8 0V28M372.9 0V28M392.9 0V28M412.9 0V28M433.0 0V28M453.0 0V28M473.1 0V28M493.1 0V28M513.2 0V28M533.2 0V28M553.3 0V28M573.3 0V28M593.4 0V28M613.5 0V28M633.5 0V28M653.5 0V28M673.6 0V28M693.6 0V28M713.7 0V28M733.8 0V28M753.8 0V28M773.9 0V28M793.9 0V28M813.9 0V28M834.0 0V28M854.0 0V28M874.1 0V28M894.1 0V28M914.2 0V28M934.2 0V28M954.3 0V28M974.3 0V28M994.4 0V28M1014.4 0V28M1034.5 0V28M1054.5 0V28M1074.6 0V28M1094.7 0V28M1114.7 0V28M1134.8 0V28M1154.8 0V28M1174.8 0V28M1194.9 0V28M1214.9 0V28M1235.0 0V28M1255.0 0V28M1275.1 0V28M1295.1 0V28M1315.2 0V28M1335.2 0V28M1355.3 0V28" stroke="#000" stroke-opacity="0.07" stroke-width="1" shape-rendering="crispEdges"/><path d="M32.0 0V28M72.1 0V28M112.2 0V28M152.3 0V28M192.4 0V28M232.5 0V28M272.6 0V28M312.7 0V28M352.8 0V28M392.9 0V28M433.0 0V28M473.1 0V28M513.2 0V28M553.3 0V28M593.4 0V28M633.5 0V28M673.6 0V28M713.7 0V28M753.8 0V28M793.9 0V28M834.0 0V28M874.1 0V28M914.2 0V28M954.3 0V28M994.4 0V28M1034.5 0V28M1074.6 0V28M1114.7 0V28M1154.8 0V28M1194.9 0V28M1235.0 0V28M1275.1 0V28M1315.2 0V28M1355.3 0V28" stroke="#000" stroke-opacity="0.11" stroke-width="1" shape-rendering="crispEdges"/></svg>
<div class="a" style="left:232px;top:748px;width:1px;height:28px;background:#1a1a1a"></div>
<div class="a" style="left:1235px;top:748px;width:1px;height:28px;background:#3a3a3a"></div>
<div class="a" style="left:235px;top:748px;width:3px;height:28px;background:#5bc43c"></div>
<div class="a" style="left:0px;top:748px;width:1px;height:46px;background:#7a7a7a"></div>
<div class="a" style="left:0px;top:776px;width:1368px;height:18px;background:#727272"></div>
<div class="a" style="left:4px;top:777px;width:1360px;height:13px;background:linear-gradient(#a0a0a0,#8a8a8a);border:1px solid #323232;border-radius:7px"></div>
<div class="a" style="left:6px;top:779px;width:9px;height:9px;background:#6a6a6a;border-radius:50%"></div>
<div class="t" style="left:-166.5px;width:400px;text-align:center;top:778.69px;font-size:11px;color:#000;">-50</div>
<div class="t" style="left:-126.69999999999999px;width:400px;text-align:center;top:778.69px;font-size:11px;color:#000;">-40</div>
<div class="t" style="left:-86.9px;width:400px;text-align:center;top:778.69px;font-size:11px;color:#000;">-30</div>
<div class="t" style="left:-47.099999999999994px;width:400px;text-align:center;top:778.69px;font-size:11px;color:#000;">-20</div>
<div class="t" style="left:-7.300000000000011px;width:400px;text-align:center;top:778.69px;font-size:11px;color:#000;">-10</div>
<div class="t" style="left:34.5px;width:400px;text-align:center;top:778.69px;font-size:11px;color:#000;">0</div>
<div class="t" style="left:74.30000000000001px;width:400px;text-align:center;top:778.69px;font-size:11px;color:#000;">10</div>
<div class="t" style="left:114.10000000000002px;width:400px;text-align:center;top:778.69px;font-size:11px;color:#000;">20</div>
<div class="t" style="left:153.89999999999998px;width:400px;text-align:center;top:778.69px;font-size:11px;color:#000;">30</div>
<div class="t" style="left:193.7px;width:400px;text-align:center;top:778.69px;font-size:11px;color:#000;">40</div>
<div class="t" style="left:233.5px;width:400px;text-align:center;top:778.69px;font-size:11px;color:#000;">50</div>
<div class="t" style="left:273.3px;width:400px;text-align:center;top:778.69px;font-size:11px;color:#000;">60</div>
<div class="t" style="left:313.1px;width:400px;text-align:center;top:778.69px;font-size:11px;color:#000;">70</div>
<div class="t" style="left:352.9px;width:400px;text-align:center;top:778.69px;font-size:11px;color:#000;">80</div>
<div class="t" style="left:392.70000000000005px;width:400px;text-align:center;top:778.69px;font-size:11px;color:#000;">90</div>
<div class="t" style="left:432.5px;width:400px;text-align:center;top:778.69px;font-size:11px;color:#000;">100</div>
<div class="t" style="left:472.29999999999995px;width:400px;text-align:center;top:778.69px;font-size:11px;color:#000;">110</div>
<div class="t" style="left:512.1px;width:400px;text-align:center;top:778.69px;font-size:11px;color:#000;">120</div>
<div class="t" style="left:551.9px;width:400px;text-align:center;top:778.69px;font-size:11px;color:#000;">130</div>
<div class="t" style="left:591.7px;width:400px;text-align:center;top:778.69px;font-size:11px;color:#000;">140</div>
<div class="t" style="left:631.5px;width:400px;text-align:center;top:778.69px;font-size:11px;color:#000;">150</div>
<div class="t" style="left:671.3px;width:400px;text-align:center;top:778.69px;font-size:11px;color:#000;">160</div>
<div class="t" style="left:711.1px;width:400px;text-align:center;top:778.69px;font-size:11px;color:#000;">170</div>
<div class="t" style="left:750.9px;width:400px;text-align:center;top:778.69px;font-size:11px;color:#000;">180</div>
<div class="t" style="left:790.7px;width:400px;text-align:center;top:778.69px;font-size:11px;color:#000;">190</div>
<div class="t" style="left:830.5px;width:400px;text-align:center;top:778.69px;font-size:11px;color:#000;">200</div>
<div class="t" style="left:870.3px;width:400px;text-align:center;top:778.69px;font-size:11px;color:#000;">210</div>
<div class="t" style="left:910.0999999999999px;width:400px;text-align:center;top:778.69px;font-size:11px;color:#000;">220</div>
<div class="t" style="left:949.9000000000001px;width:400px;text-align:center;top:778.69px;font-size:11px;color:#000;">230</div>
<div class="t" style="left:989.7px;width:400px;text-align:center;top:778.69px;font-size:11px;color:#000;">240</div>
<div class="t" style="left:1029.5px;width:400px;text-align:center;top:778.69px;font-size:11px;color:#000;">250</div>
<div class="t" style="left:1069.3px;width:400px;text-align:center;top:778.69px;font-size:11px;color:#000;">260</div>
<div class="t" style="left:1109.1px;width:400px;text-align:center;top:778.69px;font-size:11px;color:#000;">270</div>
<div class="t" style="left:1148.9px;width:400px;text-align:center;top:778.69px;font-size:11px;color:#000;">280</div>
<div class="a" style="left:0px;top:790px;width:1368px;height:1px;background:#868686"></div>
<div class="a" style="left:0px;top:793px;width:1368px;height:1px;background:#646464"></div>
<div class="a" style="left:0px;top:794px;width:1368px;height:1px;background:#848484"></div>
<svg style="left:1355px;top:748px" width="13" height="13" viewBox="0 0 13 13"><path d="M0.5 0L13 12.5M4 0L13 9M7.5 0L13 5.5M11 0L13 2" stroke="#858585" stroke-width="1.5"/><path d="M2.25 0L13 10.75M5.75 0L13 7.25M9.25 0L13 3.75" stroke="#000" stroke-width="1.5"/></svg>
<svg style="left:0px;top:734px" width="13" height="13" viewBox="0 0 13 13"><path d="M0 2L11 13M0 6L7 13M0 10L3 13" stroke="#a0a0a0" stroke-width="2"/><path d="M0 0.5L12.5 13M0 4.5L8.5 13M0 8.5L4.5 13" stroke="#111" stroke-width="1"/></svg>
<svg style="left:0px;top:807px" width="13" height="13" viewBox="0 0 13 13"><path d="M0 2L11 13M0 6L7 13M0 10L3 13" stroke="#a0a0a0" stroke-width="2"/><path d="M0 0.5L12.5 13M0 4.5L8.5 13M0 8.5L4.5 13" stroke="#111" stroke-width="1"/></svg>
<div class="a" style="left:9px;top:797px;width:30px;height:20px;background:linear-gradient(#555,#383838);border:1px solid #1c1c1c;box-shadow:0 1px 0 rgba(255,255,255,0.13);border-radius:4px"></div>
<svg style="left:13px;top:800px" width="14" height="14" viewBox="0 0 14 14"><circle cx="7" cy="7" r="6" fill="#eee" stroke="#111" stroke-width="1"/><path d="M7 7L4.5 3.5" stroke="#d02020" stroke-width="1.4"/><path d="M7 7L10 9" stroke="#888" stroke-width="1"/></svg>
<svg style="left:29px;top:800px" width="8" height="14" viewBox="0 0 8 14"><path d="M0.5 5.5 L3.5 0.5 L6.5 5.5Z M0.5 8 L3.5 13 L6.5 8Z" fill="#b8b8b8"/></svg>
<svg style="left:47px;top:801px" width="12" height="12" viewBox="0 0 12 12"><circle cx="4.8" cy="5.2" r="4.2" fill="#7a7a7a" stroke="#3e3e3e" stroke-width="0.9"/><circle cx="4.8" cy="5.2" r="3.2" fill="none" stroke="#b8b8b8" stroke-width="0.9"/><path d="M2.8 5.2h4" stroke="#d0d0d0" stroke-width="1.4"/></svg>
<div class="t" style="left:71px;top:802.69px;font-size:11px;color:#000;">View</div>
<div class="t" style="left:110px;top:802.69px;font-size:11px;color:#000;">Marker</div>
<div class="t" style="left:160px;top:802.69px;font-size:11px;color:#000;">Frame</div>
<div class="t" style="left:207px;top:802.69px;font-size:11px;color:#000;">Playback</div>
<div class="a" style="left:265px;top:797px;width:20px;height:20px;background:linear-gradient(#a8a8a8,#8a8a8a);border:1px solid #222;box-shadow:0 1px 0 rgba(255,255,255,0.13);border-radius:4px"></div>
<svg style="left:268px;top:800px" width="14" height="14" viewBox="0 0 14 14"><circle cx="7" cy="7" r="6" fill="#eee" stroke="#111" stroke-width="1"/><path d="M7 7V1A6 6 0 0 1 13 7Z" fill="#f0a020"/><path d="M7 7L4.5 10" stroke="#d02020" stroke-width="1.3"/></svg>
<div class="a" style="left:290px;top:797px;width:117px;height:20px;background:linear-gradient(#a6a6a6,#b6b6b6);border:1px solid #191919;border-radius:10px 0 0 10px"></div>
<div class="a" style="left:406px;top:797px;width:112px;height:20px;background:linear-gradient(#a6a6a6,#b6b6b6);border:1px solid #191919;border-radius:0 10px 10px 0"></div>
<svg style="left:295px;top:803px" width="5" height="8" viewBox="0 0 5 8"><path d="M4 0.5L0.5 4L4 7.5Z" fill="#777"/></svg>
<svg style="left:396px;top:803px" width="5" height="8" viewBox="0 0 5 8"><path d="M1 0.5L4.5 4L1 7.5Z" fill="#777"/></svg>
<svg style="left:411px;top:803px" width="5" height="8" viewBox="0 0 5 8"><path d="M4 0.5L0.5 4L4 7.5Z" fill="#777"/></svg>
<svg style="left:508px;top:803px" width="5" height="8" viewBox="0 0 5 8"><path d="M1 0.5L4.5 4L1 7.5Z" fill="#777"/></svg>
<div class="t" style="left:148px;width:400px;text-align:center;top:802.69px;font-size:11px;color:#000;">Start: 1</div>
<div class="t" style="left:261px;width:400px;text-align:center;top:802.69px;font-size:11px;color:#000;">End: 250</div>
<div class="a" style="left:523px;top:797px;width:90px;height:20px;background:linear-gradient(#a6a6a6,#b6b6b6);border:1px solid #191919;border-radius:10px"></div>
<svg style="left:528px;top:803px" width="5" height="8" viewBox="0 0 5 8"><path d="M4 0.5L0.5 4L4 7.5Z" fill="#777"/></svg>
<svg style="left:603px;top:803px" width="5" height="8" viewBox="0 0 5 8"><path d="M1 0.5L4.5 4L1 7.5Z" fill="#777"/></svg>
<div class="t" style="left:367px;width:400px;text-align:center;top:802.69px;font-size:11px;color:#000;">1</div>
<div class="a" style="left:629px;top:797px;width:120px;height:20px;background:linear-gradient(#a8a8a8,#8a8a8a);border:1px solid #222;box-shadow:0 1px 0 rgba(255,255,255,0.13);border-radius:4px"></div>
<div class="a" style="left:649px;top:797px;width:1px;height:20px;background:#191919"></div>
<div class="a" style="left:669px;top:797px;width:1px;height:20px;background:#191919"></div>
<div class="a" style="left:689px;top:797px;width:1px;height:20px;background:#191919"></div>
<div class="a" style="left:709px;top:797px;width:1px;height:20px;background:#191919"></div>
<div class="a" style="left:729px;top:797px;width:1px;height:20px;background:#191919"></div>
<svg style="left:632px;top:800px" width="14" height="14" viewBox="0 0 14 14"><path d="M2.5 2V12M12 2L5.5 7L12 12Z M8.5 2L2.5 7L8.5 12" stroke="#111" fill="#fff" stroke-width="1"/></svg>
<svg style="left:652px;top:800px" width="14" height="14" viewBox="0 0 14 14"><path d="M7 2L1.5 7L7 12Z M12.5 2L7 7L12.5 12Z" stroke="#111" fill="#fff" stroke-width="1"/></svg>
<svg style="left:672px;top:800px" width="14" height="14" viewBox="0 0 14 14"><path d="M11 1.5L3 7L11 12.5Z" stroke="#111" fill="#fff" stroke-width="1"/></svg>
<svg style="left:692px;top:800px" width="14" height="14" viewBox="0 0 14 14"><path d="M3 1.5L11 7L3 12.5Z" stroke="#111" fill="#fff" stroke-width="1"/></svg>
<svg style="left:712px;top:800px" width="14" height="14" viewBox="0 0 14 14"><path d="M1.5 2L7 7L1.5 12Z M7 2L12.5 7L7 12Z" stroke="#111" fill="#fff" stroke-width="1"/></svg>
<svg style="left:732px;top:800px" width="14" height="14" viewBox="0 0 14 14"><path d="M11.5 2V12M2 2L8.5 7L2 12Z M5.5 2L11.5 7L5.5 12" stroke="#111" fill="#fff" stroke-width="1"/></svg>
<div class="a" style="left:754px;top:797px;width:111px;height:20px;background:linear-gradient(#555,#383838);border:1px solid #1c1c1c;box-shadow:0 1px 0 rgba(255,255,255,0.13);border-radius:4px"></div>
<div class="t" style="left:762px;top:802.69px;font-size:11px;color:#fff;">No Sync</div>
<svg style="left:856px;top:800px" width="8" height="14" viewBox="0 0 8 14"><path d="M0.5 5.5 L3.5 0.5 L6.5 5.5Z M0.5 8 L3.5 13 L6.5 8Z" fill="#b8b8b8"/></svg>
<div class="a" style="left:881px;top:797px;width:20px;height:20px;background:linear-gradient(#a8a8a8,#8a8a8a);border:1px solid #222;box-shadow:0 1px 0 rgba(255,255,255,0.13);border-radius:4px"></div>
<svg style="left:885px;top:801px" width="12" height="12" viewBox="0 0 12 12"><circle cx="6" cy="6" r="4.5" fill="#e83818" stroke="#551" stroke-width="0.8"/></svg>
<div class="a" style="left:907px;top:797px;width:124px;height:20px;background:linear-gradient(#a8a8a8,#bcbcbc);border:1px solid #191919;border-radius:4px 0 0 4px"></div>
<svg style="left:910px;top:798px" width="18" height="17" viewBox="0 0 18 17"><path d="M8 12L14 5.5L15.5 7M12 7.5L13.5 9" stroke="#222" stroke-width="3" fill="none"/><path d="M8 12L14 5.5L15.5 7M12 7.5L13.5 9" stroke="#eee" stroke-width="1.4" fill="none"/><circle cx="8" cy="12.5" r="3" fill="#eee" stroke="#222" stroke-width="1"/><path d="M5 10V1.5H7.5" stroke="#222" stroke-width="3" fill="none"/><path d="M5 10V1.5H7.5" stroke="#e8d860" stroke-width="1.4" fill="none"/><circle cx="5" cy="12" r="3" fill="#e8d860" stroke="#222" stroke-width="1"/><circle cx="5" cy="12" r="1" fill="#222"/></svg>
<div class="a" style="left:1030px;top:797px;width:21px;height:20px;background:linear-gradient(#a8a8a8,#8a8a8a);border:1px solid #222;box-shadow:0 1px 0 rgba(255,255,255,0.13);"></div>
<div class="a" style="left:1050px;top:797px;width:21px;height:20px;background:linear-gradient(#a8a8a8,#8a8a8a);border:1px solid #222;box-shadow:0 1px 0 rgba(255,255,255,0.13);border-radius:0 4px 4px 0"></div>
<svg style="left:1033px;top:800px" width="14" height="14" viewBox="0 0 14 14"><path d="M5 9.5L11.5 3L13 4.5M9.5 5L11 6.5" stroke="#222" stroke-width="3" fill="none"/><path d="M5 9.5L11.5 3L13 4.5M9.5 5L11 6.5" stroke="#eee" stroke-width="1.4" fill="none"/><circle cx="4" cy="10.5" r="3" fill="#eee" stroke="#222" stroke-width="1"/><circle cx="4" cy="10.5" r="1" fill="#222"/></svg>
<svg style="left:1053px;top:800px" width="14" height="14" viewBox="0 0 14 14"><path d="M5 9.5L11.5 3L13 4.5M9.5 5L11 6.5" stroke="#222" stroke-width="3" fill="none"/><path d="M5 9.5L11.5 3L13 4.5M9.5 5L11 6.5" stroke="#eee" stroke-width="1.4" fill="none"/><circle cx="4" cy="10.5" r="3" fill="#eee" stroke="#222" stroke-width="1"/><circle cx="4" cy="10.5" r="1" fill="#222"/><path d="M1.5 1.5L13 13" stroke="#e02020" stroke-width="1.6"/></svg>
<div class="a" style="left:1369px;top:26px;width:215px;height:26px;background:#6a6a6a"></div>
<div class="a" style="left:1369px;top:51px;width:215px;height:1px;background:#5a5a5a"></div>
<div class="a" style="left:1369px;top:52px;width:215px;height:1px;background:#898989"></div>
<div class="a" style="left:1369px;top:53px;width:215px;height:106px;background:#727272"></div>
<div class="a" style="left:1378px;top:29px;width:30px;height:20px;background:linear-gradient(#555,#383838);border:1px solid #1c1c1c;box-shadow:0 1px 0 rgba(255,255,255,0.13);border-radius:4px"></div>
<svg style="left:1381px;top:32px" width="14" height="14" viewBox="0 0 14 14"><rect x="1" y="0.5" width="7" height="3" fill="#f0a030" stroke="#222" stroke-width="0.6"/><path d="M3 3.5V12.5H6M3 8H6" stroke="#8aa8d8" stroke-width="1" fill="none"/><rect x="6" y="6.5" width="7" height="3" fill="#fff" stroke="#222" stroke-width="0.6"/><rect x="6" y="11" width="7" height="3" fill="#fff" stroke="#222" stroke-width="0.6"/></svg>
<svg style="left:1398px;top:32px" width="8" height="14" viewBox="0 0 8 14"><path d="M0.5 5.5 L3.5 0.5 L6.5 5.5Z M0.5 8 L3.5 13 L6.5 8Z" fill="#b8b8b8"/></svg>
<svg style="left:1416px;top:34px" width="12" height="12" viewBox="0 0 12 12"><circle cx="4.8" cy="5.2" r="4.2" fill="#7a7a7a" stroke="#3e3e3e" stroke-width="0.9"/><circle cx="4.8" cy="5.2" r="3.2" fill="none" stroke="#b8b8b8" stroke-width="0.9"/><path d="M2.8 5.2h4" stroke="#d0d0d0" stroke-width="1.4"/></svg>
<div class="t" style="left:1440px;top:34.69px;font-size:11px;color:#000;">View</div>
<div class="t" style="left:1479px;top:34.69px;font-size:11px;color:#000;">Search</div>
<div class="a" style="left:1526px;top:29px;width:70px;height:20px;background:linear-gradient(#555,#383838);border:1px solid #1c1c1c;box-shadow:0 1px 0 rgba(255,255,255,0.13);border-radius:4px"></div>
<div class="t" style="left:1534px;top:34.69px;font-size:11px;color:#fff;">All Scenes</div>
<div class="a" style="left:1369px;top:54px;width:138px;height:18px;background:#868b90"></div>
<div class="a" style="left:1507px;top:54px;width:62px;height:18px;background:#777"></div>
<div class="a" style="left:1369px;top:72px;width:200px;height:21px;background:#777777"></div>
<div class="a" style="left:1369px;top:93px;width:200px;height:20px;background:#727272"></div>
<div class="a" style="left:1369px;top:113px;width:200px;height:20px;background:#777777"></div>
<div class="a" style="left:1369px;top:133px;width:200px;height:20px;background:#727272"></div>
<div class="a" style="left:1380px;top:66px;width:1px;height:80px;background:#3a3a3a"></div>
<div class="a" style="left:1369px;top:62px;width:6px;height:1px;background:#3a3a3a"></div>
<div class="a" style="left:1385px;top:123px;width:10px;height:1px;background:#3a3a3a"></div>
<svg style="left:1373px;top:54px" width="20" height="20" viewBox="0 0 20 20"><circle cx="9" cy="10" r="8.5" fill="#a0a4a8" opacity="0.7"/><g transform="translate(1.5 1.5)"><circle cx="4" cy="3.5" r="3" fill="#d8d860" opacity="0.35"/><circle cx="4" cy="3.5" r="1.7" fill="#fffff0" stroke="#b0b030" stroke-width="0.8"/><rect x="7.8" y="1.8" width="5.8" height="10" rx="2.6" fill="url(#cylG)" stroke="#0c1c4c" stroke-width="0.9"/><ellipse cx="10.7" cy="3.6" rx="2.2" ry="1.3" fill="#e4ecff"/><circle cx="5.8" cy="12" r="3.7" fill="url(#sphG)" stroke="#111" stroke-width="0.9"/></g></svg>
<div class="t" style="left:1394px;top:58.69px;font-size:11px;color:#000;">Scene</div>
<svg style="left:1381px;top:78px" width="10" height="10" viewBox="0 0 10 10"><circle cx="5" cy="5" r="4.2" fill="#e4e4e4" stroke="#1a1a1a" stroke-width="1"/><path d="M5 2.6V7.4M2.6 5H7.4" stroke="#111" stroke-width="1.3"/></svg>
<svg style="left:1395px;top:75px" width="17" height="17" viewBox="0 0 17 17"><rect x="3" y="3" width="12" height="12" fill="#e8e0b0" stroke="#111" stroke-width="0.8" transform="rotate(8 9 9)"/><rect x="1" y="1" width="11" height="11" fill="#fff" stroke="#111" stroke-width="0.8"/><rect x="5" y="3" width="4" height="6" fill="#3a74d8"/></svg>
<div class="t" style="left:1414px;top:78.69px;font-size:11px;color:#000;">RenderLayers</div>
<div class="a" style="left:1492px;top:77px;width:2px;height:12px;background:#4a4a4a"></div>
<svg style="left:1501px;top:76px" width="8" height="16" viewBox="0 0 8 16"><rect x="1" y="1" width="10" height="12" fill="#eee" stroke="#111" stroke-width="0.8"/></svg>
<div class="a" style="left:1507px;top:72px;width:62px;height:21px;background:#777777"></div>
<div class="a" style="left:1507px;top:53px;width:1px;height:90px;background:#646464"></div>
<div class="a" style="left:1527px;top:53px;width:1px;height:90px;background:#646464"></div>
<div class="a" style="left:1547px;top:53px;width:1px;height:90px;background:#646464"></div>
<svg style="left:1393px;top:94px" width="18" height="18" viewBox="0 0 18 18"><circle cx="9" cy="9" r="8" fill="#a4a8c0" opacity="0.6"/><circle cx="9" cy="9" r="6.2" fill="#4a80c8" stroke="#111" stroke-width="0.9"/><path d="M5 6Q8 4 9 7T7 11Q5 10 5 6ZM10 10Q13 9 13 12Q11 14 10 10Z" fill="#6aa040"/></svg>
<div class="t" style="left:1414px;top:98.69px;font-size:11px;color:#000;">World</div>
<svg style="left:1376px;top:118px" width="10" height="10" viewBox="0 0 10 10"><circle cx="5" cy="5" r="4.2" fill="#e4e4e4" stroke="#1a1a1a" stroke-width="1"/><path d="M5 2.6V7.4M2.6 5H7.4" stroke="#111" stroke-width="1.3"/></svg>
<svg style="left:1395px;top:115px" width="17" height="17" viewBox="0 0 17 17"><circle cx="4.5" cy="4.5" r="3.5" fill="#f0a040" stroke="#603000" stroke-width="0.9"/><circle cx="10.5" cy="4.5" r="3.5" fill="#f0a040" stroke="#603000" stroke-width="0.9"/><circle cx="4.5" cy="4.5" r="1.2" fill="#603000"/><circle cx="10.5" cy="4.5" r="1.2" fill="#603000"/><rect x="4" y="8.5" width="8" height="4.5" fill="#f0a040" stroke="#603000" stroke-width="0.9"/><path d="M12 9.5L15.5 8.5V13L12 12Z" fill="#f0a040" stroke="#603000" stroke-width="0.8"/><path d="M1 10.5H4" stroke="#603000" stroke-width="2.2"/><path d="M1.3 10.5H4" stroke="#f0a040" stroke-width="1"/></svg>
<div class="t" style="left:1414px;top:118.69px;font-size:11px;color:#000;">Camera</div>
<div class="a" style="left:1463px;top:116px;width:2px;height:12px;background:#4a4a4a"></div>
<svg style="left:1471px;top:113px" width="20" height="20" viewBox="0 0 20 20"><circle cx="10" cy="10" r="9" fill="#8e8e8e"/><g transform="translate(2 3)"><circle cx="4.5" cy="4.5" r="3.5" fill="#a8a8a8" stroke="#707070" stroke-width="0.9"/><circle cx="10.5" cy="4.5" r="3.5" fill="#a8a8a8" stroke="#707070" stroke-width="0.9"/><circle cx="4.5" cy="4.5" r="1.2" fill="#707070"/><circle cx="10.5" cy="4.5" r="1.2" fill="#707070"/><rect x="4" y="8.5" width="8" height="4.5" fill="#a8a8a8" stroke="#707070" stroke-width="0.9"/><path d="M12 9.5L15.5 8.5V13L12 12Z" fill="#a8a8a8" stroke="#707070" stroke-width="0.8"/><path d="M1 10.5H4" stroke="#707070" stroke-width="2.2"/><path d="M1.3 10.5H4" stroke="#a8a8a8" stroke-width="1"/></g></svg>
<svg style="left:1510px;top:117px" width="16" height="12" viewBox="0 0 16 12"><path d="M1 6Q8 -1 15 6Q8 13 1 6Z" fill="#fff" stroke="#111" stroke-width="0.9"/><circle cx="8" cy="6" r="2.6" fill="#111"/></svg>
<svg style="left:1533px;top:115px" width="12" height="17" viewBox="0 0 12 17"><path d="M1.5 1V13L4.5 10L7 15.5L9 14.5L6.5 9.5H10.5Z" fill="#fff" stroke="#111" stroke-width="0.9"/></svg>
<svg style="left:1550px;top:116px" width="16" height="15" viewBox="0 0 16 15"><rect x="1" y="3.5" width="13" height="10" fill="#e0e0e0" stroke="#111" stroke-width="1"/><circle cx="7.5" cy="8.5" r="3" fill="#333"/><circle cx="7.5" cy="8.5" r="1.4" fill="#b03030"/><rect x="2" y="1.5" width="3" height="2" fill="#111"/></svg>
<svg style="left:1394px;top:134px" width="18" height="9" viewBox="0 0 18 9"><circle cx="9" cy="10" r="9" fill="#b08050"/><path d="M3 4H15L12 10H6Z" fill="none" stroke="#fff" stroke-width="1.2"/></svg>
<svg style="left:1376px;top:138px" width="10" height="5" viewBox="0 0 10 5"><circle cx="5" cy="5" r="4" fill="#bbb" stroke="#111" stroke-width="0.9"/></svg>
<div class="a" style="left:1400px;top:133px;width:60px;height:9px;overflow:hidden"><div class="t" style="left:14px;top:5.7px;font-size:11px;-webkit-text-stroke:0.1px #000">Cube</div></div>
<div class="a" style="left:1451px;top:133px;width:2px;height:9px;background:#4a4a4a"></div>
<svg style="left:1458px;top:133px" width="20" height="10" viewBox="0 0 20 10"><circle cx="10" cy="10" r="9" fill="#8e8e8e"/><path d="M5 5H15" stroke="#eee" stroke-width="1.2"/><circle cx="5" cy="5" r="1.5" fill="#fff" stroke="#555" stroke-width="0.6"/><circle cx="15" cy="5" r="1.5" fill="#fff" stroke="#555" stroke-width="0.6"/></svg>
<svg style="left:1510px;top:140px" width="16" height="3" viewBox="0 0 16 3"><path d="M1 3Q8 -4 15 3" fill="#fff" stroke="#111"/></svg>
<svg style="left:1533px;top:138px" width="12" height="5" viewBox="0 0 12 5"><path d="M1.5 1V6" stroke="#111" stroke-width="1.5"/></svg>
<svg style="left:1550px;top:139px" width="16" height="4" viewBox="0 0 16 4"><rect x="1" y="1" width="13" height="4" fill="#e0e0e0" stroke="#111"/></svg>
<div class="a" style="left:1368px;top:143px;width:216px;height:16px;background:#727272"></div>
<div class="a" style="left:1374px;top:143px;width:189px;height:12px;background:#5b5b5b;border:1px solid #4a4a4a;border-radius:6px"></div>
<div class="a" style="left:1383px;top:143px;width:125px;height:12px;background:linear-gradient(#a0a0a0,#888);border:1px solid #3a3a3a;border-radius:6px"></div>
<div class="a" style="left:1568px;top:57px;width:13px;height:81px;background:#5b5b5b;border:1px solid #4a4a4a;border-radius:6px"></div>
<div class="a" style="left:1568px;top:57px;width:13px;height:59px;background:linear-gradient(90deg,#a0a0a0,#888);border:1px solid #3a3a3a;border-radius:6px"></div>
<svg style="left:1369px;top:145px" width="14" height="14" viewBox="0 0 14 14"><path d="M0 3L11 14M0 7L7 14M0 11L3 14" stroke="#a0a0a0" stroke-width="2"/><path d="M0 1.5L12.5 14M0 5.5L8.5 14M0 9.5L4.5 14" stroke="#111" stroke-width="1"/></svg>
<svg style="left:1570px;top:26px" width="14" height="14" viewBox="0 0 14 14"><path d="M1.5 0L14 12.5M5 0L14 9M8.5 0L14 5.5M12 0L14 2" stroke="#8a8a8a" stroke-width="1.5"/><path d="M3.25 0L14 10.75M6.75 0L14 7.25M10.25 0L14 3.75" stroke="#000" stroke-width="1.5"/></svg>
<div class="a" style="left:1369px;top:160px;width:215px;height:660px;background:#727272"></div>
<div class="a" style="left:1369px;top:160px;width:215px;height:25px;background:#6a6a6a"></div>
<div class="a" style="left:1369px;top:185px;width:215px;height:1px;background:#5a5a5a"></div>
<div class="a" style="left:1369px;top:186px;width:215px;height:1px;background:#898989"></div>
<div class="a" style="left:1378px;top:162px;width:30px;height:20px;background:linear-gradient(#555,#383838);border:1px solid #1c1c1c;box-shadow:0 1px 0 rgba(255,255,255,0.13);border-radius:4px"></div>
<svg style="left:1381px;top:165px" width="14" height="14" viewBox="0 0 14 14"><rect x="1" y="1.5" width="12" height="4.5" rx="2" fill="#444" stroke="#fff" stroke-width="1"/><rect x="8" y="2" width="4.5" height="3.5" rx="1.5" fill="#fff"/><rect x="1" y="8" width="12" height="4.5" rx="2" fill="#fff" stroke="#fff" stroke-width="1"/><path d="M3.5 9L2 10.25L3.5 11.5M10.5 9L12 10.25L10.5 11.5" stroke="#111" fill="none" stroke-width="0.9"/></svg>
<svg style="left:1398px;top:165px" width="8" height="14" viewBox="0 0 8 14"><path d="M0.5 5.5 L3.5 0.5 L6.5 5.5Z M0.5 8 L3.5 13 L6.5 8Z" fill="#b8b8b8"/></svg>
<div class="a" style="left:1414px;top:162px;width:176px;height:20px;background:linear-gradient(#555,#383838);border:1px solid #1c1c1c;box-shadow:0 1px 0 rgba(255,255,255,0.13);border-radius:4px 0 0 4px"></div>
<div class="a" style="left:1415px;top:163px;width:20px;height:18px;background:linear-gradient(#6a94d4,#4a74b8);border-radius:3px 0 0 3px"></div>
<div class="a" style="left:1435px;top:162px;width:1px;height:20px;background:#1e1e1e"></div>
<div class="a" style="left:1457px;top:162px;width:1px;height:20px;background:#1e1e1e"></div>
<div class="a" style="left:1479px;top:162px;width:1px;height:20px;background:#1e1e1e"></div>
<div class="a" style="left:1501px;top:162px;width:1px;height:20px;background:#1e1e1e"></div>
<div class="a" style="left:1523px;top:162px;width:1px;height:20px;background:#1e1e1e"></div>
<div class="a" style="left:1545px;top:162px;width:1px;height:20px;background:#1e1e1e"></div>
<div class="a" style="left:1567px;top:162px;width:1px;height:20px;background:#1e1e1e"></div>
<svg style="left:1418px;top:165px" width="16" height="15" viewBox="0 0 16 15"><rect x="1.5" y="4" width="13" height="9" fill="#dcdcdc" stroke="#111" stroke-width="1"/><circle cx="8.5" cy="8.5" r="3" fill="#333" stroke="#111"/><circle cx="8.5" cy="8.5" r="1.5" fill="#a03030"/><rect x="2.5" y="2" width="3" height="2" fill="#fff" stroke="#111" stroke-width="0.6"/><circle cx="5" cy="6" r="0.8" fill="#e02020"/></svg>
<svg style="left:1440px;top:165px" width="16" height="16" viewBox="0 0 16 16"><rect x="8" y="2.5" width="5" height="9" rx="2.2" fill="#6a8cc8" stroke="#222" stroke-width="0.8" opacity="0.8"/><circle cx="6" cy="11.5" r="3.4" fill="#9a9a9a" stroke="#222" stroke-width="0.8"/><circle cx="4" cy="3.5" r="1.5" fill="none" stroke="#c8c860" stroke-width="0.8"/></svg>
<svg style="left:1461px;top:165px" width="15" height="15" viewBox="0 0 15 15"><circle cx="7.5" cy="7.5" r="6.3" fill="#5a84b8" stroke="#333" stroke-width="0.8"/><path d="M4 5Q7 3 8 6T6 10Q4 9 4 5ZM9 9Q12 8 12 11Q10 13 9 9Z" fill="#6a9050"/></svg>
<svg style="left:1483px;top:165px" width="15" height="15" viewBox="0 0 15 15"><path d="M7.5 1L13.5 3.5V11L7.5 14L1.5 11V3.5Z" fill="#c89858" stroke="#333" stroke-width="0.8"/><path d="M7.5 6L13.5 3.5V11L7.5 14Z" fill="#9a6a38"/><path d="M1.5 3.5L7.5 6L13.5 3.5" fill="none" stroke="#e8c898" stroke-width="0.7"/></svg>
<svg style="left:1504px;top:165px" width="16" height="15" viewBox="0 0 16 15"><g transform="rotate(-40 8 7.5)"><rect x="0.8" y="5" width="8.5" height="5" rx="2.5" fill="none" stroke="#333" stroke-width="2.6"/><rect x="6.7" y="5" width="8.5" height="5" rx="2.5" fill="none" stroke="#333" stroke-width="2.6"/><rect x="0.8" y="5" width="8.5" height="5" rx="2.5" fill="none" stroke="#d8d8d8" stroke-width="1.2"/><rect x="6.7" y="5" width="8.5" height="5" rx="2.5" fill="none" stroke="#d8d8d8" stroke-width="1.2"/></g></svg>
<svg style="left:1526px;top:165px" width="16" height="15" viewBox="0 0 16 15"><path d="M2.5 13L8.5 7" stroke="#222" stroke-width="3.6" stroke-linecap="round"/><path d="M2.5 13L8.5 7" stroke="#6a9ae0" stroke-width="1.8" stroke-linecap="round"/><path d="M7.5 8A4 4 0 0 1 11 1.5L9.8 4.2L11.3 5.7L14 4.5A4 4 0 0 1 7.5 8Z" fill="#6a9ae0" stroke="#222" stroke-width="0.9"/></svg>
<svg style="left:1548px;top:165px" width="16" height="15" viewBox="0 0 16 15"><path d="M2.5 3L13.5 3L8 13Z" fill="none" stroke="#dcdcdc" stroke-width="1"/><circle cx="2.5" cy="3" r="1.5" fill="#fff" stroke="#111" stroke-width="0.6"/><circle cx="13.5" cy="3" r="1.5" fill="#fff" stroke="#111" stroke-width="0.6"/><circle cx="8" cy="13" r="1.5" fill="#fff" stroke="#111" stroke-width="0.6"/></svg>
<svg style="left:1570px;top:165px" width="16" height="15" viewBox="0 0 16 15"><circle cx="8" cy="7.5" r="6.3" fill="#9a7a70" stroke="#333" stroke-width="0.8"/><path d="M8 1.2A6.3 6.3 0 0 0 1.7 7.5H8Z" fill="#e0e0e0"/><path d="M8 7.5V13.8A6.3 6.3 0 0 0 14.3 7.5Z" fill="#d8d0c8"/></svg>
<svg style="left:1568px;top:160px" width="16" height="16" viewBox="0 0 16 16"><path d="M3.5 0L16 12.5M7 0L16 9M10.5 0L16 5.5M14 0L16 2" stroke="#8a8a8a" stroke-width="1.5"/><path d="M5.25 0L16 10.75M8.75 0L16 7.25M12.25 0L16 3.75" stroke="#000" stroke-width="1.5"/></svg>
<div class="a" style="left:1568px;top:191px;width:13px;height:625px;background:#5b5b5b;border:1px solid #4a4a4a;border-radius:6px"></div>
<div class="a" style="left:1568px;top:191px;width:13px;height:509px;background:linear-gradient(90deg,#a0a0a0,#888);border:1px solid #3a3a3a;border-radius:6px"></div>
<svg style="left:1379px;top:196px" width="17" height="17" viewBox="0 0 17 17"><path d="M2 15L7 10" stroke="#111" stroke-width="2.2"/><path d="M2 15L7 10" stroke="#eee" stroke-width="1"/><path d="M5.5 7.5L11 2.5L14.5 6L9.5 11.5Z" fill="#eee" stroke="#111" stroke-width="0.9"/><path d="M4.5 7L10 12.5" stroke="#111" stroke-width="1.8"/><path d="M4.5 7L10 12.5" stroke="#ddd" stroke-width="0.8"/></svg>
<svg style="left:1401px;top:196px" width="17" height="17" viewBox="0 0 17 17"><circle cx="4" cy="3.5" r="3" fill="#d8d860" opacity="0.35"/><circle cx="4" cy="3.5" r="1.7" fill="#fffff0" stroke="#b0b030" stroke-width="0.8"/><rect x="7.8" y="1.8" width="5.8" height="10" rx="2.6" fill="url(#cylG)" stroke="#0c1c4c" stroke-width="0.9"/><ellipse cx="10.7" cy="3.6" rx="2.2" ry="1.3" fill="#e4ecff"/><circle cx="5.8" cy="12" r="3.7" fill="url(#sphG)" stroke="#111" stroke-width="0.9"/></svg>
<div class="t" style="left:1421px;top:199.69px;font-size:11px;color:#000;">Scene</div>
<div class="a" style="left:1374px;top:221px;width:189px;height:1px;background:#424242"></div>
<div class="a" style="left:1374px;top:222px;width:189px;height:1px;background:#949494"></div>
<svg style="left:1382px;top:230px" width="9" height="9" viewBox="0 0 9 9"><path d="M0 0.5H8.5L4.25 8.5Z" fill="#1e1e1e"/></svg>
<div class="t" style="left:1394px;top:228.84px;font-size:12px;color:#000;">Render</div>
<svg style="left:1543px;top:224px" width="17" height="17" viewBox="0 0 17 17"><path d="M1 1L16 16M6 1L16 11M11 1L16 6" stroke="#9c9c9c"/><path d="M0 2L14 16M5 2L15 12M10 2L15 7" stroke="#5a5a5a" stroke-opacity="0.5"/></svg>
<div class="a" style="left:1377px;top:254px;width:183px;height:20px;background:linear-gradient(#a8a8a8,#8a8a8a);border:1px solid #222;box-shadow:0 1px 0 rgba(255,255,255,0.13);border-radius:4px"></div>
<div class="a" style="left:1437px;top:254px;width:1px;height:20px;background:#191919"></div>
<div class="a" style="left:1498px;top:254px;width:1px;height:20px;background:#191919"></div>
<svg style="left:1380px;top:256px" width="17" height="17" viewBox="0 0 17 17"><rect x="1.5" y="5" width="13" height="9.5" fill="#dcdcdc" stroke="#111" stroke-width="1"/><circle cx="8" cy="9.5" r="3.3" fill="#333" stroke="#111"/><circle cx="8" cy="9.5" r="1.5" fill="#a03030"/><path d="M13 0.5L13.8 2.3L15.8 2.6L14.3 3.8L14.7 5.8L13 4.8L11.3 5.8L11.7 3.8L10.2 2.6L12.2 2.3Z" fill="#ffe060" stroke="#886" stroke-width="0.3"/></svg>
<div class="t" style="left:1398px;top:259.69px;font-size:11px;color:#000;">Render</div>
<svg style="left:1440px;top:256px" width="17" height="17" viewBox="0 0 17 17"><rect x="1.5" y="8" width="12" height="8" fill="#444" stroke="#111" stroke-width="1"/><path d="M1 7L13 2.5L14 5.5L2 9Z" fill="#eee" stroke="#111" stroke-width="0.8"/><path d="M4 6L6 4.5M8 5L10 3.5" stroke="#111" stroke-width="1.2"/><rect x="1" y="6.5" width="3" height="3" fill="#5a8ad0"/><path d="M4 12H12M4 14H12" stroke="#999" stroke-width="0.8"/></svg>
<div class="t" style="left:1456px;top:259.69px;font-size:11px;color:#000;">Animati</div>
<svg style="left:1503px;top:256px" width="14" height="17" viewBox="0 0 14 17"><path d="M1.5 2L12.5 8.5L1.5 15Z" fill="#fff" stroke="#111" stroke-width="1"/></svg>
<div class="t" style="left:1526px;top:259.69px;font-size:11px;color:#000;">Play</div>
<div class="t" style="left:1385px;top:284.69px;font-size:11px;color:#000;">Display:</div>
<div class="a" style="left:1442px;top:279px;width:118px;height:20px;background:linear-gradient(#555,#383838);border:1px solid #1c1c1c;box-shadow:0 1px 0 rgba(255,255,255,0.13);border-radius:4px"></div>
<div class="t" style="left:1450px;top:284.69px;font-size:11px;color:#fff;">Image Editor</div>
<svg style="left:1550px;top:282px" width="8" height="14" viewBox="0 0 8 14"><path d="M0.5 5.5 L3.5 0.5 L6.5 5.5Z M0.5 8 L3.5 13 L6.5 8Z" fill="#b8b8b8"/></svg>
<div class="a" style="left:1374px;top:306px;width:189px;height:1px;background:#424242"></div>
<div class="a" style="left:1374px;top:307px;width:189px;height:1px;background:#949494"></div>
<svg style="left:1382px;top:315px" width="9" height="9" viewBox="0 0 9 9"><path d="M0.5 0V8.5L8.5 4.25Z" fill="#1e1e1e"/></svg>
<div class="t" style="left:1394px;top:313.84px;font-size:12px;color:#000;">Layers</div>
<svg style="left:1543px;top:309px" width="17" height="17" viewBox="0 0 17 17"><path d="M1 1L16 16M6 1L16 11M11 1L16 6" stroke="#9c9c9c"/><path d="M0 2L14 16M5 2L15 12M10 2L15 7" stroke="#5a5a5a" stroke-opacity="0.5"/></svg>
<div class="a" style="left:1374px;top:330px;width:189px;height:1px;background:#424242"></div>
<div class="a" style="left:1374px;top:331px;width:189px;height:1px;background:#949494"></div>
<svg style="left:1382px;top:339px" width="9" height="9" viewBox="0 0 9 9"><path d="M0 0.5H8.5L4.25 8.5Z" fill="#1e1e1e"/></svg>
<div class="t" style="left:1394px;top:337.84px;font-size:12px;color:#000;">Dimensions</div>
<svg style="left:1543px;top:333px" width="17" height="17" viewBox="0 0 17 17"><path d="M1 1L16 16M6 1L16 11M11 1L16 6" stroke="#9c9c9c"/><path d="M0 2L14 16M5 2L15 12M10 2L15 7" stroke="#5a5a5a" stroke-opacity="0.5"/></svg>
<div class="a" style="left:1377px;top:363px;width:143px;height:20px;background:linear-gradient(#555,#383838);border:1px solid #1c1c1c;box-shadow:0 1px 0 rgba(255,255,255,0.13);border-radius:4px 0 0 4px"></div>
<div class="t" style="left:1385px;top:368.69px;font-size:11px;color:#fff;">Render Presets</div>
<svg style="left:1511px;top:366px" width="8" height="14" viewBox="0 0 8 14"><path d="M0.5 5.5 L3.5 0.5 L6.5 5.5Z M0.5 8 L3.5 13 L6.5 8Z" fill="#b8b8b8"/></svg>
<div class="a" style="left:1519px;top:363px;width:21px;height:20px;background:linear-gradient(#a8a8a8,#8a8a8a);border:1px solid #222;box-shadow:0 1px 0 rgba(255,255,255,0.13);"></div>
<div class="a" style="left:1539px;top:363px;width:21px;height:20px;background:linear-gradient(#a8a8a8,#8a8a8a);border:1px solid #222;box-shadow:0 1px 0 rgba(255,255,255,0.13);border-radius:0 4px 4px 0"></div>
<svg style="left:1522px;top:365px" width="15" height="15" viewBox="0 0 15 15"><path d="M7.5 2V13M2 7.5H13" stroke="#111" stroke-width="3.4"/><path d="M7.5 2.8V12.2M2.8 7.5H12.2" stroke="#fff" stroke-width="1.6"/></svg>
<svg style="left:1542px;top:365px" width="15" height="15" viewBox="0 0 15 15"><path d="M2 7.5H13" stroke="#111" stroke-width="3.4"/><path d="M2.8 7.5H12.2" stroke="#fff" stroke-width="1.6"/></svg>
<div class="t" style="left:1385px;top:393.69px;font-size:11px;color:#000;">Resolution:</div>
<div class="t" style="left:1480px;top:393.69px;font-size:11px;color:#000;">Frame Range:</div>
<div class="a" style="left:1377px;top:408px;width:87px;height:60px;background:#191919;border-radius:9px"></div>
<div class="a" style="left:1378px;top:409px;width:85px;height:18px;background:linear-gradient(#a6a6a6,#b6b6b6);border-radius:8px 8px 0 0;"></div>
<svg style="left:1384px;top:414px" width="5" height="8" viewBox="0 0 5 8"><path d="M4 0.5L0.5 4L4 7.5Z" fill="#707070"/></svg>
<svg style="left:1452px;top:414px" width="5" height="8" viewBox="0 0 5 8"><path d="M1 0.5L4.5 4L1 7.5Z" fill="#707070"/></svg>
<div class="t" style="left:1221.0px;width:400px;text-align:center;top:413.69px;font-size:11px;color:#000;">X: 1920</div>
<div class="a" style="left:1378px;top:428px;width:85px;height:19px;background:linear-gradient(#a6a6a6,#b6b6b6);"></div>
<svg style="left:1384px;top:433px" width="5" height="8" viewBox="0 0 5 8"><path d="M4 0.5L0.5 4L4 7.5Z" fill="#707070"/></svg>
<svg style="left:1452px;top:433px" width="5" height="8" viewBox="0 0 5 8"><path d="M1 0.5L4.5 4L1 7.5Z" fill="#707070"/></svg>
<div class="t" style="left:1221.0px;width:400px;text-align:center;top:433.69px;font-size:11px;color:#000;">Y: 1080</div>
<div class="a" style="left:1378px;top:448px;width:85px;height:19px;background:linear-gradient(#a6a6a6,#b6b6b6);border-radius:0 0 8px 8px;overflow:hidden"><div class="a" style="left:0;top:0;width:46px;height:30px;background:linear-gradient(#6a6a6a,#808080)"></div></div>
<div class="t" style="left:1220.5px;width:400px;text-align:center;top:453.69px;font-size:11px;color:#000;">50%</div>
<div class="a" style="left:1472px;top:408px;width:88px;height:60px;background:#191919;border-radius:9px"></div>
<div class="a" style="left:1473px;top:409px;width:86px;height:18px;background:linear-gradient(#a6a6a6,#b6b6b6);border-radius:8px 8px 0 0;"></div>
<svg style="left:1479px;top:414px" width="5" height="8" viewBox="0 0 5 8"><path d="M4 0.5L0.5 4L4 7.5Z" fill="#707070"/></svg>
<svg style="left:1548px;top:414px" width="5" height="8" viewBox="0 0 5 8"><path d="M1 0.5L4.5 4L1 7.5Z" fill="#707070"/></svg>
<div class="t" style="left:1316.5px;width:400px;text-align:center;top:413.69px;font-size:11px;color:#000;">Start Fra: 1</div>
<div class="a" style="left:1473px;top:428px;width:86px;height:19px;background:linear-gradient(#a6a6a6,#b6b6b6);"></div>
<svg style="left:1479px;top:433px" width="5" height="8" viewBox="0 0 5 8"><path d="M4 0.5L0.5 4L4 7.5Z" fill="#707070"/></svg>
<svg style="left:1548px;top:433px" width="5" height="8" viewBox="0 0 5 8"><path d="M1 0.5L4.5 4L1 7.5Z" fill="#707070"/></svg>
<div class="t" style="left:1316.5px;width:400px;text-align:center;top:433.69px;font-size:11px;color:#000;">End Fr: 250</div>
<div class="a" style="left:1473px;top:448px;width:86px;height:19px;background:linear-gradient(#a6a6a6,#b6b6b6);border-radius:0 0 8px 8px;"></div>
<svg style="left:1479px;top:453px" width="5" height="8" viewBox="0 0 5 8"><path d="M4 0.5L0.5 4L4 7.5Z" fill="#707070"/></svg>
<svg style="left:1548px;top:453px" width="5" height="8" viewBox="0 0 5 8"><path d="M1 0.5L4.5 4L1 7.5Z" fill="#707070"/></svg>
<div class="t" style="left:1316.5px;width:400px;text-align:center;top:453.69px;font-size:11px;color:#000;">Frame St: 1</div>
<div class="t" style="left:1385px;top:473.69px;font-size:11px;color:#000;">Aspect Ratio:</div>
<div class="t" style="left:1480px;top:473.69px;font-size:11px;color:#000;">Frame Rate:</div>
<div class="a" style="left:1377px;top:488px;width:87px;height:40px;background:#191919;border-radius:9px"></div>
<div class="a" style="left:1378px;top:489px;width:85px;height:18px;background:linear-gradient(#a6a6a6,#b6b6b6);border-radius:8px 8px 0 0;"></div>
<svg style="left:1384px;top:494px" width="5" height="8" viewBox="0 0 5 8"><path d="M4 0.5L0.5 4L4 7.5Z" fill="#707070"/></svg>
<svg style="left:1452px;top:494px" width="5" height="8" viewBox="0 0 5 8"><path d="M1 0.5L4.5 4L1 7.5Z" fill="#707070"/></svg>
<div class="t" style="left:1221.0px;width:400px;text-align:center;top:493.69px;font-size:11px;color:#000;">X: 1.000</div>
<div class="a" style="left:1378px;top:508px;width:85px;height:19px;background:linear-gradient(#a6a6a6,#b6b6b6);border-radius:0 0 8px 8px;"></div>
<svg style="left:1384px;top:513px" width="5" height="8" viewBox="0 0 5 8"><path d="M4 0.5L0.5 4L4 7.5Z" fill="#707070"/></svg>
<svg style="left:1452px;top:513px" width="5" height="8" viewBox="0 0 5 8"><path d="M1 0.5L4.5 4L1 7.5Z" fill="#707070"/></svg>
<div class="t" style="left:1221.0px;width:400px;text-align:center;top:513.69px;font-size:11px;color:#000;">Y: 1.000</div>
<div class="a" style="left:1472px;top:488px;width:88px;height:20px;background:linear-gradient(#555,#383838);border:1px solid #1c1c1c;box-shadow:0 1px 0 rgba(255,255,255,0.13);border-radius:4px"></div>
<div class="t" style="left:1480px;top:493.69px;font-size:11px;color:#fff;">24 fps</div>
<svg style="left:1550px;top:491px" width="8" height="14" viewBox="0 0 8 14"><path d="M0.5 5.5 L3.5 0.5 L6.5 5.5Z M0.5 8 L3.5 13 L6.5 8Z" fill="#b8b8b8"/></svg>
<div class="t" style="left:1480px;top:513.69px;font-size:11px;color:#000;">Time Remappin</div>
<div class="a" style="left:1472px;top:528px;width:88px;height:20px;background:#191919;border-radius:9px"></div>
<div class="a" style="left:1473px;top:529px;width:42px;height:18px;background:linear-gradient(#a6a6a6,#b6b6b6);border-radius:8px 0 0 8px"></div>
<div class="a" style="left:1516px;top:529px;width:43px;height:18px;background:linear-gradient(#a6a6a6,#b6b6b6);border-radius:0 8px 8px 0"></div>
<svg style="left:1478px;top:534px" width="5" height="8" viewBox="0 0 5 8"><path d="M4 0.5L0.5 4L4 7.5Z" fill="#707070"/></svg>
<svg style="left:1505px;top:534px" width="5" height="8" viewBox="0 0 5 8"><path d="M1 0.5L4.5 4L1 7.5Z" fill="#707070"/></svg>
<svg style="left:1522px;top:534px" width="5" height="8" viewBox="0 0 5 8"><path d="M4 0.5L0.5 4L4 7.5Z" fill="#707070"/></svg>
<svg style="left:1549px;top:534px" width="5" height="8" viewBox="0 0 5 8"><path d="M1 0.5L4.5 4L1 7.5Z" fill="#707070"/></svg>
<div class="t" style="left:1294px;width:400px;text-align:center;top:533.69px;font-size:11px;color:#000;">100</div>
<div class="t" style="left:1338px;width:400px;text-align:center;top:533.69px;font-size:11px;color:#000;">10</div>
<div class="a" style="left:1380px;top:533px;width:14px;height:14px;background:linear-gradient(#555,#3c3c3c);border:1px solid #222;border-radius:3px"></div>
<div class="t" style="left:1402px;top:535.69px;font-size:11px;color:#000;">Bo</div>
<div class="a" style="left:1427px;top:533px;width:14px;height:14px;background:linear-gradient(#666,#575757);border:1px solid #4a4a4a;border-radius:3px"></div>
<div class="t" style="left:1449px;top:535.69px;font-size:11px;color:#4c4c4c;">Cr</div>
<div class="a" style="left:1374px;top:557px;width:189px;height:1px;background:#424242"></div>
<div class="a" style="left:1374px;top:558px;width:189px;height:1px;background:#949494"></div>
<svg style="left:1382px;top:566px" width="9" height="9" viewBox="0 0 9 9"><path d="M0 0.5H8.5L4.25 8.5Z" fill="#1e1e1e"/></svg>
<div class="a" style="left:1394px;top:563px;width:14px;height:14px;background:linear-gradient(#555,#3c3c3c);border:1px solid #111;border-radius:3px"></div>
<svg style="left:1395px;top:563px" width="13" height="13" viewBox="0 0 13 13"><path d="M2.5 6.5L5.5 9.5L11 2" stroke="#fff" stroke-width="1.8" fill="none"/></svg>
<div class="t" style="left:1414px;top:564.84px;font-size:12px;color:#000;">Anti-Aliasing</div>
<svg style="left:1543px;top:560px" width="17" height="17" viewBox="0 0 17 17"><path d="M1 1L16 16M6 1L16 11M11 1L16 6" stroke="#9c9c9c"/><path d="M0 2L14 16M5 2L15 12M10 2L15 7" stroke="#5a5a5a" stroke-opacity="0.5"/></svg>
<div class="a" style="left:1377px;top:590px;width:87px;height:20px;background:linear-gradient(#555,#383838);border:1px solid #1c1c1c;box-shadow:0 1px 0 rgba(255,255,255,0.13);border-radius:4px"></div>
<div class="a" style="left:1398px;top:591px;width:21px;height:18px;background:linear-gradient(#6a94d4,#4a74b8)"></div>
<div class="a" style="left:1397px;top:590px;width:1px;height:20px;background:#111"></div>
<div class="a" style="left:1418px;top:590px;width:1px;height:20px;background:#111"></div>
<div class="a" style="left:1439px;top:590px;width:1px;height:20px;background:#111"></div>
<div class="t" style="left:1187.5px;width:400px;text-align:center;top:595.69px;font-size:11px;color:#fff;">5</div>
<div class="t" style="left:1208px;width:400px;text-align:center;top:595.69px;font-size:11px;color:#111;">8</div>
<div class="t" style="left:1229px;width:400px;text-align:center;top:595.69px;font-size:11px;color:#fff;">11</div>
<div class="t" style="left:1251px;width:400px;text-align:center;top:595.69px;font-size:11px;color:#fff;">16</div>
<div class="a" style="left:1472px;top:590px;width:88px;height:20px;background:linear-gradient(#555,#383838);border:1px solid #1c1c1c;box-shadow:0 1px 0 rgba(255,255,255,0.13);border-radius:4px"></div>
<div class="t" style="left:1480px;top:595.69px;font-size:11px;color:#fff;">Mitchell-Netr</div>
<svg style="left:1550px;top:593px" width="8" height="14" viewBox="0 0 8 14"><path d="M0.5 5.5 L3.5 0.5 L6.5 5.5Z M0.5 8 L3.5 13 L6.5 8Z" fill="#b8b8b8"/></svg>
<div class="a" style="left:1380px;top:615px;width:14px;height:14px;background:linear-gradient(#555,#3c3c3c);border:1px solid #111;border-radius:3px"></div>
<div class="t" style="left:1403px;top:617.69px;font-size:11px;color:#000;">Full Sample</div>
<div class="a" style="left:1472px;top:613px;width:88px;height:19px;background:linear-gradient(#a6a6a6,#b6b6b6);border:1px solid #191919;border-radius:9px;background:linear-gradient(#b0b0b0,#c4c4c4)"></div>
<svg style="left:1478px;top:618px" width="5" height="8" viewBox="0 0 5 8"><path d="M4 0.5L0.5 4L4 7.5Z" fill="#707070"/></svg>
<svg style="left:1549px;top:618px" width="5" height="8" viewBox="0 0 5 8"><path d="M1 0.5L4.5 4L1 7.5Z" fill="#707070"/></svg>
<div class="t" style="left:1316px;width:400px;text-align:center;top:617.69px;font-size:11px;color:#000;">Size: 1.000</div>
<div class="a" style="left:1374px;top:639px;width:189px;height:1px;background:#424242"></div>
<div class="a" style="left:1374px;top:640px;width:189px;height:1px;background:#949494"></div>
<svg style="left:1382px;top:648px" width="9" height="9" viewBox="0 0 9 9"><path d="M0.5 0V8.5L8.5 4.25Z" fill="#1e1e1e"/></svg>
<div class="a" style="left:1394px;top:645px;width:14px;height:14px;background:linear-gradient(#555,#3c3c3c);border:1px solid #111;border-radius:3px"></div>
<div class="t" style="left:1414px;top:646.84px;font-size:12px;color:#000;">Sampled Motion Blur</div>
<svg style="left:1543px;top:642px" width="17" height="17" viewBox="0 0 17 17"><path d="M1 1L16 16M6 1L16 11M11 1L16 6" stroke="#9c9c9c"/><path d="M0 2L14 16M5 2L15 12M10 2L15 7" stroke="#5a5a5a" stroke-opacity="0.5"/></svg>
<div class="a" style="left:1374px;top:663px;width:189px;height:1px;background:#424242"></div>
<div class="a" style="left:1374px;top:664px;width:189px;height:1px;background:#949494"></div>
<svg style="left:1382px;top:672px" width="9" height="9" viewBox="0 0 9 9"><path d="M0.5 0V8.5L8.5 4.25Z" fill="#1e1e1e"/></svg>
<div class="t" style="left:1394px;top:670.84px;font-size:12px;color:#000;">Shading</div>
<svg style="left:1543px;top:666px" width="17" height="17" viewBox="0 0 17 17"><path d="M1 1L16 16M6 1L16 11M11 1L16 6" stroke="#9c9c9c"/><path d="M0 2L14 16M5 2L15 12M10 2L15 7" stroke="#5a5a5a" stroke-opacity="0.5"/></svg>
<div class="a" style="left:1374px;top:687px;width:189px;height:1px;background:#424242"></div>
<div class="a" style="left:1374px;top:688px;width:189px;height:1px;background:#949494"></div>
<svg style="left:1382px;top:696px" width="9" height="9" viewBox="0 0 9 9"><path d="M0.5 0V8.5L8.5 4.25Z" fill="#1e1e1e"/></svg>
<div class="t" style="left:1394px;top:694.84px;font-size:12px;color:#000;">Performance</div>
<svg style="left:1543px;top:690px" width="17" height="17" viewBox="0 0 17 17"><path d="M1 1L16 16M6 1L16 11M11 1L16 6" stroke="#9c9c9c"/><path d="M0 2L14 16M5 2L15 12M10 2L15 7" stroke="#5a5a5a" stroke-opacity="0.5"/></svg>
<div class="a" style="left:1374px;top:711px;width:189px;height:1px;background:#424242"></div>
<div class="a" style="left:1374px;top:712px;width:189px;height:1px;background:#949494"></div>
<svg style="left:1382px;top:720px" width="9" height="9" viewBox="0 0 9 9"><path d="M0.5 0V8.5L8.5 4.25Z" fill="#1e1e1e"/></svg>
<div class="t" style="left:1394px;top:718.84px;font-size:12px;color:#000;">Post Processing</div>
<svg style="left:1543px;top:714px" width="17" height="17" viewBox="0 0 17 17"><path d="M1 1L16 16M6 1L16 11M11 1L16 6" stroke="#9c9c9c"/><path d="M0 2L14 16M5 2L15 12M10 2L15 7" stroke="#5a5a5a" stroke-opacity="0.5"/></svg>
<div class="a" style="left:1374px;top:735px;width:189px;height:1px;background:#424242"></div>
<div class="a" style="left:1374px;top:736px;width:189px;height:1px;background:#949494"></div>
<svg style="left:1382px;top:744px" width="9" height="9" viewBox="0 0 9 9"><path d="M0.5 0V8.5L8.5 4.25Z" fill="#1e1e1e"/></svg>
<div class="a" style="left:1394px;top:741px;width:14px;height:14px;background:linear-gradient(#555,#3c3c3c);border:1px solid #111;border-radius:3px"></div>
<div class="t" style="left:1414px;top:742.84px;font-size:12px;color:#000;">Stamp</div>
<svg style="left:1543px;top:738px" width="17" height="17" viewBox="0 0 17 17"><path d="M1 1L16 16M6 1L16 11M11 1L16 6" stroke="#9c9c9c"/><path d="M0 2L14 16M5 2L15 12M10 2L15 7" stroke="#5a5a5a" stroke-opacity="0.5"/></svg>
<div class="a" style="left:1374px;top:759px;width:189px;height:1px;background:#424242"></div>
<div class="a" style="left:1374px;top:760px;width:189px;height:1px;background:#949494"></div>
<svg style="left:1382px;top:768px" width="9" height="9" viewBox="0 0 9 9"><path d="M0 0.5H8.5L4.25 8.5Z" fill="#1e1e1e"/></svg>
<div class="t" style="left:1394px;top:766.84px;font-size:12px;color:#000;">Output</div>
<svg style="left:1543px;top:762px" width="17" height="17" viewBox="0 0 17 17"><path d="M1 1L16 16M6 1L16 11M11 1L16 6" stroke="#9c9c9c"/><path d="M0 2L14 16M5 2L15 12M10 2L15 7" stroke="#5a5a5a" stroke-opacity="0.5"/></svg>
<div class="a" style="left:1377px;top:793px;width:163px;height:19px;background:linear-gradient(#999,#b4b4b4);border:1px solid #191919;border-radius:4px 0 0 4px"></div>
<div class="t" style="left:1384px;top:797.69px;font-size:11px;color:#000;">/tmp\</div>
<div class="a" style="left:1539px;top:793px;width:21px;height:19px;background:linear-gradient(#a8a8a8,#8a8a8a);border:1px solid #222;box-shadow:0 1px 0 rgba(255,255,255,0.13);border-radius:0 4px 4px 0"></div>
<svg style="left:1541px;top:795px" width="17" height="15" viewBox="0 0 17 15"><rect x="7" y="1" width="7" height="7" fill="#fff" stroke="#111" stroke-width="0.8"/><path d="M1.5 4H6L7 5.5H15V14H1.5Z" fill="#e8e0a0" stroke="#111" stroke-width="0.8"/><path d="M1.5 14L3.5 8H16L14 14Z" fill="#f0e8b8" stroke="#111" stroke-width="0.8"/></svg>
<div class="a" style="left:1369px;top:187px;width:1px;height:619px;background:#888888"></div>
<svg style="left:1369px;top:806px" width="14" height="14" viewBox="0 0 14 14"><path d="M0 3L11 14M0 7L7 14M0 11L3 14" stroke="#a0a0a0" stroke-width="2"/><path d="M0 1.5L12.5 14M0 5.5L8.5 14M0 9.5L4.5 14" stroke="#111" stroke-width="1"/></svg>
</body></html>
